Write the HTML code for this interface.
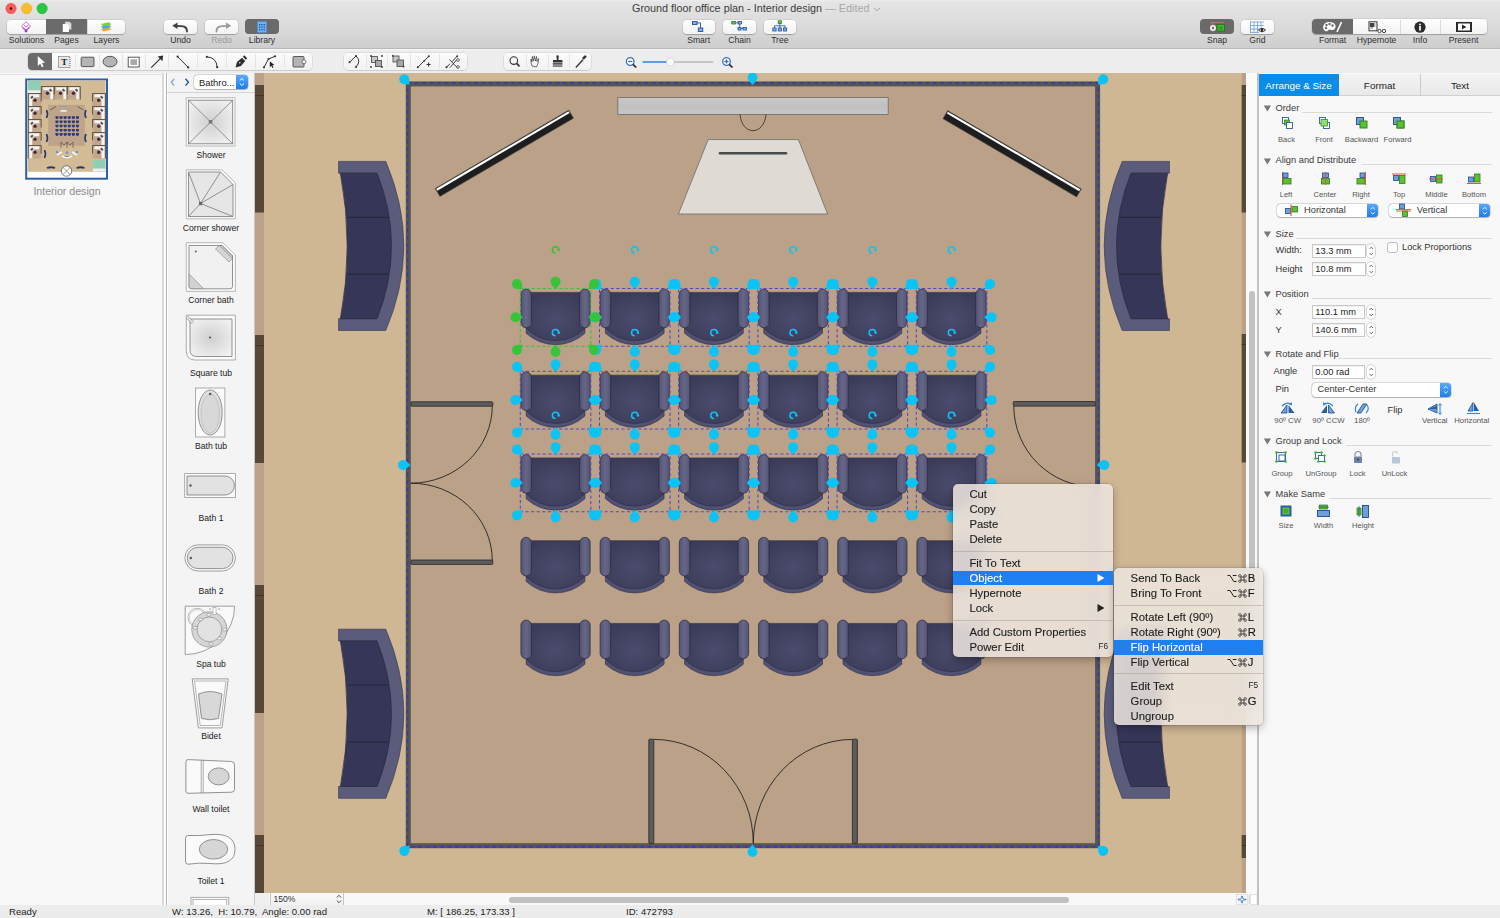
<!DOCTYPE html>
<html><head><meta charset="utf-8">
<style>
*{box-sizing:border-box;margin:0;padding:0}
html,body{width:1500px;height:918px;overflow:hidden;background:#ececec;font-family:"Liberation Sans",sans-serif;color:#222}
.abs{position:absolute}
svg{position:absolute;overflow:visible}
.lbl{position:absolute;font-size:9px;line-height:10px;color:#2e2e2e;white-space:nowrap}
.btn{position:absolute;height:15px;border-radius:4px;background:linear-gradient(#fefefe,#f3f3f3);box-shadow:0 0 0 0.5px rgba(0,0,0,.12),0 1px 1px rgba(0,0,0,.22)}
.dark{background:#6a6a6a}
.st{position:absolute;top:905px;font-size:9.6px;line-height:13px;color:#222;white-space:nowrap}
.mi{position:absolute;font-size:11.3px;line-height:15px;color:#141414;-webkit-text-stroke:0.12px currentColor;white-space:nowrap}
.sc{position:absolute;font-size:11.3px;line-height:15px;color:#1e1e1e;white-space:nowrap;text-align:right}
.libl{position:absolute;font-size:8.6px;line-height:10px;color:#1a1a1a;white-space:nowrap;text-align:center;width:88px;left:167px}
.rp{position:absolute;font-size:9px;line-height:11px;color:#333;white-space:nowrap}
.rps{position:absolute;font-size:7.6px;line-height:9px;color:#555;white-space:nowrap;text-align:center}
</style></head>
<body>

<div class="abs" style="left:0;top:0;width:1500px;height:49px;background:linear-gradient(#ececec 0px,#e5e5e5 2px,#d9d9d9 30px,#cecece 48px)"></div>
<div class="abs" style="left:0;top:48px;width:1500px;height:1px;background:#b8b8b8"></div><div class="abs" style="left:0;top:49px;width:1500px;height:1px;background:#f6f6f6"></div>
<div class="abs" style="left:0;top:50px;width:1500px;height:23px;background:#ededed"></div>

<div class="abs" style="left:0;top:73px;width:168px;height:832px;background:#f8f8f8"></div>
<div class="abs" style="left:162.4px;top:73px;width:1.4px;height:832px;background:#dadada"></div><div class="abs" style="left:163.8px;top:73px;width:2px;height:832px;background:#fdfdfd"></div><div class="abs" style="left:0;top:73.6px;width:162.4px;height:1px;background:#e4e4e4"></div>
<div class="abs" style="left:165.8px;top:73px;width:1.2px;height:832px;background:#b5b5b5"></div><div class="abs" style="left:167px;top:73px;width:1px;height:832px;background:#fdfdfd"></div>
<div class="abs" style="left:168px;top:73px;width:86px;height:832px;background:#f4f4f4"></div>
<div class="abs" style="left:253.8px;top:73px;width:1.2px;height:832px;background:#c9c9c9"></div><div class="abs" style="left:1246px;top:73px;width:11px;height:820px;background:#fafafa"></div>
<div class="abs" style="left:1257px;top:73px;width:1.8px;height:832px;background:#c2c2c2"></div>
<div class="abs" style="left:1258.8px;top:73px;width:241.2px;height:832px;background:#f8f8f8"></div>
<div class="abs" style="left:0;top:905px;width:1500px;height:13px;background:#ececec"></div>
<div class="st" style="left:9px">Ready</div>
<div class="st" style="left:172px">W: 13.26,&nbsp; H: 10.79,&nbsp; Angle: 0.00 rad</div>
<div class="st" style="left:427px">M: [ 186.25, 173.33 ]</div>
<div class="st" style="left:626px">ID: 472793</div>

<div class="abs" style="left:254.5px;top:893.3px;width:991.5px;height:11.7px;background:#f8f8f8"></div>
<div class="abs" style="left:254.5px;top:893.3px;width:0.8px;height:11.7px;background:#b8b8b8"></div>
<div class="abs" style="left:255.3px;top:893.3px;width:14px;height:11.7px;background:#efefef"></div>
<div class="abs" style="left:269.5px;top:893.3px;width:74px;height:11.7px;background:linear-gradient(#f9f9f9,#f1f1f1);border-left:0.8px solid #c4c4c4;border-right:0.8px solid #c4c4c4"></div>
<div class="abs" style="left:273.5px;top:893.5px;font-size:8.6px;line-height:11px;color:#333">150%</div>
<svg style="left:335px;top:893px" width="8" height="12" viewBox="0 0 8 12"><path d="M1.8,4.5 L4,2.3 L6.2,4.5 M1.8,7.5 L4,9.7 L6.2,7.5" fill="none" stroke="#333" stroke-width="0.9"/></svg>
<div class="abs" style="left:509px;top:896.5px;width:559.5px;height:6px;border-radius:3px;background:#c0c0c0"></div>
<div class="abs" style="left:1246px;top:893.3px;width:11px;height:11.7px;background:#f8f8f8"></div>
<svg style="left:1236px;top:894px" width="22" height="11" viewBox="0 0 22 11">
<rect x="0.5" y="0.5" width="11" height="10" fill="#f4f6fa" stroke="#c8ccd4" stroke-width="0.5"/>
<path d="M6,1.5 L4.5,3.5 H7.5 Z M6,9.5 L4.5,7.5 H7.5 Z M1.5,5.5 L3.5,4 V7 Z M10.5,5.5 L8.5,4 V7 Z" fill="#3a6fc0"/>
<circle cx="6" cy="5.5" r="1.6" fill="none" stroke="#3a6fc0" stroke-width="0.7"/>
<path d="M13.2,1 V10" stroke="#c0c8d8" stroke-width="0.8"/><rect x="14.5" y="0.5" width="6.5" height="10" fill="#fff" stroke="#c8c8c8" stroke-width="0.5"/>
</svg>
<div class="abs" style="left:1249px;top:290.8px;width:6.2px;height:414px;border-radius:3.1px;background:#c2c2c2"></div>
<svg style="left:255px;top:73px;overflow:hidden" width="991" height="820" viewBox="255 73 991 820"><defs>
<radialGradient id="seatg" cx="0.5" cy="0.55" r="0.6"><stop offset="0" stop-color="#4b4b6c"/><stop offset="1" stop-color="#3b3b59"/></radialGradient>
<linearGradient id="armg" x1="0" x2="1" y1="0" y2="0"><stop offset="0" stop-color="#545474"/><stop offset="0.5" stop-color="#666688"/><stop offset="1" stop-color="#545474"/></linearGradient>
<linearGradient id="scrg" x1="0" x2="0" y1="0" y2="1"><stop offset="0" stop-color="#c9c9c9"/><stop offset="0.5" stop-color="#c0c0c0"/><stop offset="1" stop-color="#c6c6c6"/></linearGradient>
</defs><rect x="255" y="73" width="991" height="820" fill="#cfb794"/><rect x="255" y="73" width="9" height="820" fill="#bba187"/><rect x="255" y="85" width="9" height="127.5" fill="#574838"/><line x1="255" x2="264" y1="95.5" y2="95.5" stroke="#3b3026" stroke-width="0.8"/><rect x="255" y="335" width="9" height="128" fill="#574838"/><line x1="255" x2="264" y1="345.5" y2="345.5" stroke="#3b3026" stroke-width="0.8"/><rect x="255" y="585" width="9" height="128" fill="#574838"/><line x1="255" x2="264" y1="595.5" y2="595.5" stroke="#3b3026" stroke-width="0.8"/><rect x="255" y="835" width="9" height="58" fill="#574838"/><line x1="255" x2="264" y1="845.5" y2="845.5" stroke="#3b3026" stroke-width="0.8"/><rect x="1241.7" y="73" width="4.3" height="820" fill="#bba187"/><rect x="1241.7" y="85" width="4.3" height="127.5" fill="#574838"/><line x1="1241.7" x2="1246" y1="95.5" y2="95.5" stroke="#3b3026" stroke-width="0.8"/><rect x="1241.7" y="334" width="4.3" height="128.5" fill="#574838"/><line x1="1241.7" x2="1246" y1="344.5" y2="344.5" stroke="#3b3026" stroke-width="0.8"/><rect x="1241.7" y="585" width="4.3" height="128" fill="#574838"/><line x1="1241.7" x2="1246" y1="595.5" y2="595.5" stroke="#3b3026" stroke-width="0.8"/><rect x="1241.7" y="835" width="4.3" height="23" fill="#574838"/><line x1="1241.7" x2="1246" y1="845.5" y2="845.5" stroke="#3b3026" stroke-width="0.8"/><rect x="408.3" y="83.9" width="689.3" height="761.8" fill="#bba187" stroke="#555555" stroke-width="5"/><rect x="407.5" y="83" width="691" height="763.7" fill="none" stroke="#3636b4" stroke-width="1.5" stroke-dasharray="3.8 3.6"/><rect x="617.8" y="97.6" width="270.4" height="16.9" fill="url(#scrg)" stroke="#6a6a6a" stroke-width="0.8"/><path d="M740,114.5 C742,136 764,136 766,114.5" fill="none" stroke="#2a2a2a" stroke-width="0.8"/><path d="M708.2,139.6 L798.4,139.6 L827.6,214 L678.4,214 Z" fill="#dfdbd4" stroke="#6a6a6a" stroke-width="0.8"/><line x1="720" y1="153.2" x2="786" y2="153.2" stroke="#4a4a4a" stroke-width="2.6" stroke-linecap="round"/><g transform="translate(504.35,153.30) rotate(-30.39)"><rect x="-77.50" y="-4.7" width="154.99" height="9.4" fill="#1e1e1e" stroke="#555" stroke-width="0.5"/><line x1="-76.70" x2="76.70" y1="-2.8000000000000003" y2="-2.8000000000000003" stroke="#ffffff" stroke-width="2.2"/></g><g transform="translate(1012.15,153.80) rotate(30.39)"><rect x="-77.50" y="-4.7" width="154.99" height="9.4" fill="#1e1e1e" stroke="#555" stroke-width="0.5"/><line x1="-76.70" x2="76.70" y1="-2.8000000000000003" y2="-2.8000000000000003" stroke="#ffffff" stroke-width="2.2"/></g><g transform="translate(0,0)"><path d="M338.6,161.4 L385.8,161.4 Q421.8,245.9 385.8,330.5 L338.6,330.5 L338.6,318.7 L377,318.7 Q405.8,245.9 377,173.2 L338.6,173.2 Z" fill="#5b5b7c" stroke="#3e3e56" stroke-width="0.7"/><path d="M340.4,173.2 L377,173.2 Q405.8,245.9 377,318.7 L340.4,318.7 Q354,245.9 340.4,173.2 Z" fill="#363659" stroke="#27273a" stroke-width="0.7"/><line x1="347.5" y1="217.3" x2="389" y2="217.3" stroke="#22222f" stroke-width="0.8"/><line x1="347.5" y1="274.2" x2="389" y2="274.2" stroke="#22222f" stroke-width="0.8"/></g><g transform="translate(0,467.8)"><path d="M338.6,161.4 L385.8,161.4 Q421.8,245.9 385.8,330.5 L338.6,330.5 L338.6,318.7 L377,318.7 Q405.8,245.9 377,173.2 L338.6,173.2 Z" fill="#5b5b7c" stroke="#3e3e56" stroke-width="0.7"/><path d="M340.4,173.2 L377,173.2 Q405.8,245.9 377,318.7 L340.4,318.7 Q354,245.9 340.4,173.2 Z" fill="#363659" stroke="#27273a" stroke-width="0.7"/><line x1="347.5" y1="217.3" x2="389" y2="217.3" stroke="#22222f" stroke-width="0.8"/><line x1="347.5" y1="274.2" x2="389" y2="274.2" stroke="#22222f" stroke-width="0.8"/></g><g transform="translate(1508,0) scale(-1,1)"><path d="M338.6,161.4 L385.8,161.4 Q421.8,245.9 385.8,330.5 L338.6,330.5 L338.6,318.7 L377,318.7 Q405.8,245.9 377,173.2 L338.6,173.2 Z" fill="#5b5b7c" stroke="#3e3e56" stroke-width="0.7"/><path d="M340.4,173.2 L377,173.2 Q405.8,245.9 377,318.7 L340.4,318.7 Q354,245.9 340.4,173.2 Z" fill="#363659" stroke="#27273a" stroke-width="0.7"/><line x1="347.5" y1="217.3" x2="389" y2="217.3" stroke="#22222f" stroke-width="0.8"/><line x1="347.5" y1="274.2" x2="389" y2="274.2" stroke="#22222f" stroke-width="0.8"/></g><g transform="translate(1508,467.8) scale(-1,1)"><path d="M338.6,161.4 L385.8,161.4 Q421.8,245.9 385.8,330.5 L338.6,330.5 L338.6,318.7 L377,318.7 Q405.8,245.9 377,173.2 L338.6,173.2 Z" fill="#5b5b7c" stroke="#3e3e56" stroke-width="0.7"/><path d="M340.4,173.2 L377,173.2 Q405.8,245.9 377,318.7 L340.4,318.7 Q354,245.9 340.4,173.2 Z" fill="#363659" stroke="#27273a" stroke-width="0.7"/><line x1="347.5" y1="217.3" x2="389" y2="217.3" stroke="#22222f" stroke-width="0.8"/><line x1="347.5" y1="274.2" x2="389" y2="274.2" stroke="#22222f" stroke-width="0.8"/></g><rect x="410.8" y="401.8" width="82.0" height="4.399999999999977" rx="1" fill="#5c5c5c" stroke="#262626" stroke-width="0.8"/><rect x="410.8" y="560" width="82.0" height="4.399999999999977" rx="1" fill="#5c5c5c" stroke="#262626" stroke-width="0.8"/><path d="M492.3,406 A81.5,77.5 0 0 1 410.8,483.2 A81.5,77.5 0 0 1 492.3,560.2" fill="none" stroke="#222" stroke-width="0.9"/><rect x="1013.3" y="401.5" width="82.0" height="4.600000000000023" rx="1" fill="#5c5c5c" stroke="#262626" stroke-width="0.8"/><path d="M1013.8,406 A81.5,81 0 0 0 1095.3,487" fill="none" stroke="#222" stroke-width="0.9"/><rect x="648.8" y="739.2" width="5.0" height="104.19999999999993" rx="1" fill="#5c5c5c" stroke="#262626" stroke-width="0.8"/><rect x="852.4" y="739.2" width="5.0" height="104.19999999999993" rx="1" fill="#5c5c5c" stroke="#262626" stroke-width="0.8"/><path d="M653.8,739.4 A99.5,104 0 0 1 753.3,843.4 A99.5,104 0 0 1 852.4,739.4" fill="none" stroke="#222" stroke-width="0.9"/><g transform="translate(520.30,288.50)"><path d="M5.9,39 L5.9,44.8 A43.5,43.5 0 0 0 64.6,44.8 L64.6,39 Z" fill="#515173" stroke="#2e2e44" stroke-width="0.6"/><path d="M10.8,3.9 L59.7,3.9 L59.7,37.5 L64.6,39.8 A41,41 0 0 1 5.9,39.8 L10.8,37.5 Z" fill="url(#seatg)" stroke="#2c2c44" stroke-width="0.6"/><rect x="0.6" y="0.6" width="10.5" height="38.6" rx="5.2" fill="url(#armg)" stroke="#2a2a3c" stroke-width="0.7"/><rect x="59.4" y="0.6" width="10.5" height="38.6" rx="5.2" fill="url(#armg)" stroke="#2a2a3c" stroke-width="0.7"/></g><g transform="translate(599.50,288.50)"><path d="M5.9,39 L5.9,44.8 A43.5,43.5 0 0 0 64.6,44.8 L64.6,39 Z" fill="#515173" stroke="#2e2e44" stroke-width="0.6"/><path d="M10.8,3.9 L59.7,3.9 L59.7,37.5 L64.6,39.8 A41,41 0 0 1 5.9,39.8 L10.8,37.5 Z" fill="url(#seatg)" stroke="#2c2c44" stroke-width="0.6"/><rect x="0.6" y="0.6" width="10.5" height="38.6" rx="5.2" fill="url(#armg)" stroke="#2a2a3c" stroke-width="0.7"/><rect x="59.4" y="0.6" width="10.5" height="38.6" rx="5.2" fill="url(#armg)" stroke="#2a2a3c" stroke-width="0.7"/></g><g transform="translate(678.70,288.50)"><path d="M5.9,39 L5.9,44.8 A43.5,43.5 0 0 0 64.6,44.8 L64.6,39 Z" fill="#515173" stroke="#2e2e44" stroke-width="0.6"/><path d="M10.8,3.9 L59.7,3.9 L59.7,37.5 L64.6,39.8 A41,41 0 0 1 5.9,39.8 L10.8,37.5 Z" fill="url(#seatg)" stroke="#2c2c44" stroke-width="0.6"/><rect x="0.6" y="0.6" width="10.5" height="38.6" rx="5.2" fill="url(#armg)" stroke="#2a2a3c" stroke-width="0.7"/><rect x="59.4" y="0.6" width="10.5" height="38.6" rx="5.2" fill="url(#armg)" stroke="#2a2a3c" stroke-width="0.7"/></g><g transform="translate(757.90,288.50)"><path d="M5.9,39 L5.9,44.8 A43.5,43.5 0 0 0 64.6,44.8 L64.6,39 Z" fill="#515173" stroke="#2e2e44" stroke-width="0.6"/><path d="M10.8,3.9 L59.7,3.9 L59.7,37.5 L64.6,39.8 A41,41 0 0 1 5.9,39.8 L10.8,37.5 Z" fill="url(#seatg)" stroke="#2c2c44" stroke-width="0.6"/><rect x="0.6" y="0.6" width="10.5" height="38.6" rx="5.2" fill="url(#armg)" stroke="#2a2a3c" stroke-width="0.7"/><rect x="59.4" y="0.6" width="10.5" height="38.6" rx="5.2" fill="url(#armg)" stroke="#2a2a3c" stroke-width="0.7"/></g><g transform="translate(837.10,288.50)"><path d="M5.9,39 L5.9,44.8 A43.5,43.5 0 0 0 64.6,44.8 L64.6,39 Z" fill="#515173" stroke="#2e2e44" stroke-width="0.6"/><path d="M10.8,3.9 L59.7,3.9 L59.7,37.5 L64.6,39.8 A41,41 0 0 1 5.9,39.8 L10.8,37.5 Z" fill="url(#seatg)" stroke="#2c2c44" stroke-width="0.6"/><rect x="0.6" y="0.6" width="10.5" height="38.6" rx="5.2" fill="url(#armg)" stroke="#2a2a3c" stroke-width="0.7"/><rect x="59.4" y="0.6" width="10.5" height="38.6" rx="5.2" fill="url(#armg)" stroke="#2a2a3c" stroke-width="0.7"/></g><g transform="translate(916.30,288.50)"><path d="M5.9,39 L5.9,44.8 A43.5,43.5 0 0 0 64.6,44.8 L64.6,39 Z" fill="#515173" stroke="#2e2e44" stroke-width="0.6"/><path d="M10.8,3.9 L59.7,3.9 L59.7,37.5 L64.6,39.8 A41,41 0 0 1 5.9,39.8 L10.8,37.5 Z" fill="url(#seatg)" stroke="#2c2c44" stroke-width="0.6"/><rect x="0.6" y="0.6" width="10.5" height="38.6" rx="5.2" fill="url(#armg)" stroke="#2a2a3c" stroke-width="0.7"/><rect x="59.4" y="0.6" width="10.5" height="38.6" rx="5.2" fill="url(#armg)" stroke="#2a2a3c" stroke-width="0.7"/></g><g transform="translate(520.30,371.25)"><path d="M5.9,39 L5.9,44.8 A43.5,43.5 0 0 0 64.6,44.8 L64.6,39 Z" fill="#515173" stroke="#2e2e44" stroke-width="0.6"/><path d="M10.8,3.9 L59.7,3.9 L59.7,37.5 L64.6,39.8 A41,41 0 0 1 5.9,39.8 L10.8,37.5 Z" fill="url(#seatg)" stroke="#2c2c44" stroke-width="0.6"/><rect x="0.6" y="0.6" width="10.5" height="38.6" rx="5.2" fill="url(#armg)" stroke="#2a2a3c" stroke-width="0.7"/><rect x="59.4" y="0.6" width="10.5" height="38.6" rx="5.2" fill="url(#armg)" stroke="#2a2a3c" stroke-width="0.7"/></g><g transform="translate(599.50,371.25)"><path d="M5.9,39 L5.9,44.8 A43.5,43.5 0 0 0 64.6,44.8 L64.6,39 Z" fill="#515173" stroke="#2e2e44" stroke-width="0.6"/><path d="M10.8,3.9 L59.7,3.9 L59.7,37.5 L64.6,39.8 A41,41 0 0 1 5.9,39.8 L10.8,37.5 Z" fill="url(#seatg)" stroke="#2c2c44" stroke-width="0.6"/><rect x="0.6" y="0.6" width="10.5" height="38.6" rx="5.2" fill="url(#armg)" stroke="#2a2a3c" stroke-width="0.7"/><rect x="59.4" y="0.6" width="10.5" height="38.6" rx="5.2" fill="url(#armg)" stroke="#2a2a3c" stroke-width="0.7"/></g><g transform="translate(678.70,371.25)"><path d="M5.9,39 L5.9,44.8 A43.5,43.5 0 0 0 64.6,44.8 L64.6,39 Z" fill="#515173" stroke="#2e2e44" stroke-width="0.6"/><path d="M10.8,3.9 L59.7,3.9 L59.7,37.5 L64.6,39.8 A41,41 0 0 1 5.9,39.8 L10.8,37.5 Z" fill="url(#seatg)" stroke="#2c2c44" stroke-width="0.6"/><rect x="0.6" y="0.6" width="10.5" height="38.6" rx="5.2" fill="url(#armg)" stroke="#2a2a3c" stroke-width="0.7"/><rect x="59.4" y="0.6" width="10.5" height="38.6" rx="5.2" fill="url(#armg)" stroke="#2a2a3c" stroke-width="0.7"/></g><g transform="translate(757.90,371.25)"><path d="M5.9,39 L5.9,44.8 A43.5,43.5 0 0 0 64.6,44.8 L64.6,39 Z" fill="#515173" stroke="#2e2e44" stroke-width="0.6"/><path d="M10.8,3.9 L59.7,3.9 L59.7,37.5 L64.6,39.8 A41,41 0 0 1 5.9,39.8 L10.8,37.5 Z" fill="url(#seatg)" stroke="#2c2c44" stroke-width="0.6"/><rect x="0.6" y="0.6" width="10.5" height="38.6" rx="5.2" fill="url(#armg)" stroke="#2a2a3c" stroke-width="0.7"/><rect x="59.4" y="0.6" width="10.5" height="38.6" rx="5.2" fill="url(#armg)" stroke="#2a2a3c" stroke-width="0.7"/></g><g transform="translate(837.10,371.25)"><path d="M5.9,39 L5.9,44.8 A43.5,43.5 0 0 0 64.6,44.8 L64.6,39 Z" fill="#515173" stroke="#2e2e44" stroke-width="0.6"/><path d="M10.8,3.9 L59.7,3.9 L59.7,37.5 L64.6,39.8 A41,41 0 0 1 5.9,39.8 L10.8,37.5 Z" fill="url(#seatg)" stroke="#2c2c44" stroke-width="0.6"/><rect x="0.6" y="0.6" width="10.5" height="38.6" rx="5.2" fill="url(#armg)" stroke="#2a2a3c" stroke-width="0.7"/><rect x="59.4" y="0.6" width="10.5" height="38.6" rx="5.2" fill="url(#armg)" stroke="#2a2a3c" stroke-width="0.7"/></g><g transform="translate(916.30,371.25)"><path d="M5.9,39 L5.9,44.8 A43.5,43.5 0 0 0 64.6,44.8 L64.6,39 Z" fill="#515173" stroke="#2e2e44" stroke-width="0.6"/><path d="M10.8,3.9 L59.7,3.9 L59.7,37.5 L64.6,39.8 A41,41 0 0 1 5.9,39.8 L10.8,37.5 Z" fill="url(#seatg)" stroke="#2c2c44" stroke-width="0.6"/><rect x="0.6" y="0.6" width="10.5" height="38.6" rx="5.2" fill="url(#armg)" stroke="#2a2a3c" stroke-width="0.7"/><rect x="59.4" y="0.6" width="10.5" height="38.6" rx="5.2" fill="url(#armg)" stroke="#2a2a3c" stroke-width="0.7"/></g><g transform="translate(520.30,454.00)"><path d="M5.9,39 L5.9,44.8 A43.5,43.5 0 0 0 64.6,44.8 L64.6,39 Z" fill="#515173" stroke="#2e2e44" stroke-width="0.6"/><path d="M10.8,3.9 L59.7,3.9 L59.7,37.5 L64.6,39.8 A41,41 0 0 1 5.9,39.8 L10.8,37.5 Z" fill="url(#seatg)" stroke="#2c2c44" stroke-width="0.6"/><rect x="0.6" y="0.6" width="10.5" height="38.6" rx="5.2" fill="url(#armg)" stroke="#2a2a3c" stroke-width="0.7"/><rect x="59.4" y="0.6" width="10.5" height="38.6" rx="5.2" fill="url(#armg)" stroke="#2a2a3c" stroke-width="0.7"/></g><g transform="translate(599.50,454.00)"><path d="M5.9,39 L5.9,44.8 A43.5,43.5 0 0 0 64.6,44.8 L64.6,39 Z" fill="#515173" stroke="#2e2e44" stroke-width="0.6"/><path d="M10.8,3.9 L59.7,3.9 L59.7,37.5 L64.6,39.8 A41,41 0 0 1 5.9,39.8 L10.8,37.5 Z" fill="url(#seatg)" stroke="#2c2c44" stroke-width="0.6"/><rect x="0.6" y="0.6" width="10.5" height="38.6" rx="5.2" fill="url(#armg)" stroke="#2a2a3c" stroke-width="0.7"/><rect x="59.4" y="0.6" width="10.5" height="38.6" rx="5.2" fill="url(#armg)" stroke="#2a2a3c" stroke-width="0.7"/></g><g transform="translate(678.70,454.00)"><path d="M5.9,39 L5.9,44.8 A43.5,43.5 0 0 0 64.6,44.8 L64.6,39 Z" fill="#515173" stroke="#2e2e44" stroke-width="0.6"/><path d="M10.8,3.9 L59.7,3.9 L59.7,37.5 L64.6,39.8 A41,41 0 0 1 5.9,39.8 L10.8,37.5 Z" fill="url(#seatg)" stroke="#2c2c44" stroke-width="0.6"/><rect x="0.6" y="0.6" width="10.5" height="38.6" rx="5.2" fill="url(#armg)" stroke="#2a2a3c" stroke-width="0.7"/><rect x="59.4" y="0.6" width="10.5" height="38.6" rx="5.2" fill="url(#armg)" stroke="#2a2a3c" stroke-width="0.7"/></g><g transform="translate(757.90,454.00)"><path d="M5.9,39 L5.9,44.8 A43.5,43.5 0 0 0 64.6,44.8 L64.6,39 Z" fill="#515173" stroke="#2e2e44" stroke-width="0.6"/><path d="M10.8,3.9 L59.7,3.9 L59.7,37.5 L64.6,39.8 A41,41 0 0 1 5.9,39.8 L10.8,37.5 Z" fill="url(#seatg)" stroke="#2c2c44" stroke-width="0.6"/><rect x="0.6" y="0.6" width="10.5" height="38.6" rx="5.2" fill="url(#armg)" stroke="#2a2a3c" stroke-width="0.7"/><rect x="59.4" y="0.6" width="10.5" height="38.6" rx="5.2" fill="url(#armg)" stroke="#2a2a3c" stroke-width="0.7"/></g><g transform="translate(837.10,454.00)"><path d="M5.9,39 L5.9,44.8 A43.5,43.5 0 0 0 64.6,44.8 L64.6,39 Z" fill="#515173" stroke="#2e2e44" stroke-width="0.6"/><path d="M10.8,3.9 L59.7,3.9 L59.7,37.5 L64.6,39.8 A41,41 0 0 1 5.9,39.8 L10.8,37.5 Z" fill="url(#seatg)" stroke="#2c2c44" stroke-width="0.6"/><rect x="0.6" y="0.6" width="10.5" height="38.6" rx="5.2" fill="url(#armg)" stroke="#2a2a3c" stroke-width="0.7"/><rect x="59.4" y="0.6" width="10.5" height="38.6" rx="5.2" fill="url(#armg)" stroke="#2a2a3c" stroke-width="0.7"/></g><g transform="translate(916.30,454.00)"><path d="M5.9,39 L5.9,44.8 A43.5,43.5 0 0 0 64.6,44.8 L64.6,39 Z" fill="#515173" stroke="#2e2e44" stroke-width="0.6"/><path d="M10.8,3.9 L59.7,3.9 L59.7,37.5 L64.6,39.8 A41,41 0 0 1 5.9,39.8 L10.8,37.5 Z" fill="url(#seatg)" stroke="#2c2c44" stroke-width="0.6"/><rect x="0.6" y="0.6" width="10.5" height="38.6" rx="5.2" fill="url(#armg)" stroke="#2a2a3c" stroke-width="0.7"/><rect x="59.4" y="0.6" width="10.5" height="38.6" rx="5.2" fill="url(#armg)" stroke="#2a2a3c" stroke-width="0.7"/></g><g transform="translate(520.30,536.75)"><path d="M5.9,39 L5.9,44.8 A43.5,43.5 0 0 0 64.6,44.8 L64.6,39 Z" fill="#515173" stroke="#2e2e44" stroke-width="0.6"/><path d="M10.8,3.9 L59.7,3.9 L59.7,37.5 L64.6,39.8 A41,41 0 0 1 5.9,39.8 L10.8,37.5 Z" fill="url(#seatg)" stroke="#2c2c44" stroke-width="0.6"/><rect x="0.6" y="0.6" width="10.5" height="38.6" rx="5.2" fill="url(#armg)" stroke="#2a2a3c" stroke-width="0.7"/><rect x="59.4" y="0.6" width="10.5" height="38.6" rx="5.2" fill="url(#armg)" stroke="#2a2a3c" stroke-width="0.7"/></g><g transform="translate(599.50,536.75)"><path d="M5.9,39 L5.9,44.8 A43.5,43.5 0 0 0 64.6,44.8 L64.6,39 Z" fill="#515173" stroke="#2e2e44" stroke-width="0.6"/><path d="M10.8,3.9 L59.7,3.9 L59.7,37.5 L64.6,39.8 A41,41 0 0 1 5.9,39.8 L10.8,37.5 Z" fill="url(#seatg)" stroke="#2c2c44" stroke-width="0.6"/><rect x="0.6" y="0.6" width="10.5" height="38.6" rx="5.2" fill="url(#armg)" stroke="#2a2a3c" stroke-width="0.7"/><rect x="59.4" y="0.6" width="10.5" height="38.6" rx="5.2" fill="url(#armg)" stroke="#2a2a3c" stroke-width="0.7"/></g><g transform="translate(678.70,536.75)"><path d="M5.9,39 L5.9,44.8 A43.5,43.5 0 0 0 64.6,44.8 L64.6,39 Z" fill="#515173" stroke="#2e2e44" stroke-width="0.6"/><path d="M10.8,3.9 L59.7,3.9 L59.7,37.5 L64.6,39.8 A41,41 0 0 1 5.9,39.8 L10.8,37.5 Z" fill="url(#seatg)" stroke="#2c2c44" stroke-width="0.6"/><rect x="0.6" y="0.6" width="10.5" height="38.6" rx="5.2" fill="url(#armg)" stroke="#2a2a3c" stroke-width="0.7"/><rect x="59.4" y="0.6" width="10.5" height="38.6" rx="5.2" fill="url(#armg)" stroke="#2a2a3c" stroke-width="0.7"/></g><g transform="translate(757.90,536.75)"><path d="M5.9,39 L5.9,44.8 A43.5,43.5 0 0 0 64.6,44.8 L64.6,39 Z" fill="#515173" stroke="#2e2e44" stroke-width="0.6"/><path d="M10.8,3.9 L59.7,3.9 L59.7,37.5 L64.6,39.8 A41,41 0 0 1 5.9,39.8 L10.8,37.5 Z" fill="url(#seatg)" stroke="#2c2c44" stroke-width="0.6"/><rect x="0.6" y="0.6" width="10.5" height="38.6" rx="5.2" fill="url(#armg)" stroke="#2a2a3c" stroke-width="0.7"/><rect x="59.4" y="0.6" width="10.5" height="38.6" rx="5.2" fill="url(#armg)" stroke="#2a2a3c" stroke-width="0.7"/></g><g transform="translate(837.10,536.75)"><path d="M5.9,39 L5.9,44.8 A43.5,43.5 0 0 0 64.6,44.8 L64.6,39 Z" fill="#515173" stroke="#2e2e44" stroke-width="0.6"/><path d="M10.8,3.9 L59.7,3.9 L59.7,37.5 L64.6,39.8 A41,41 0 0 1 5.9,39.8 L10.8,37.5 Z" fill="url(#seatg)" stroke="#2c2c44" stroke-width="0.6"/><rect x="0.6" y="0.6" width="10.5" height="38.6" rx="5.2" fill="url(#armg)" stroke="#2a2a3c" stroke-width="0.7"/><rect x="59.4" y="0.6" width="10.5" height="38.6" rx="5.2" fill="url(#armg)" stroke="#2a2a3c" stroke-width="0.7"/></g><g transform="translate(916.30,536.75)"><path d="M5.9,39 L5.9,44.8 A43.5,43.5 0 0 0 64.6,44.8 L64.6,39 Z" fill="#515173" stroke="#2e2e44" stroke-width="0.6"/><path d="M10.8,3.9 L59.7,3.9 L59.7,37.5 L64.6,39.8 A41,41 0 0 1 5.9,39.8 L10.8,37.5 Z" fill="url(#seatg)" stroke="#2c2c44" stroke-width="0.6"/><rect x="0.6" y="0.6" width="10.5" height="38.6" rx="5.2" fill="url(#armg)" stroke="#2a2a3c" stroke-width="0.7"/><rect x="59.4" y="0.6" width="10.5" height="38.6" rx="5.2" fill="url(#armg)" stroke="#2a2a3c" stroke-width="0.7"/></g><g transform="translate(520.30,619.50)"><path d="M5.9,39 L5.9,44.8 A43.5,43.5 0 0 0 64.6,44.8 L64.6,39 Z" fill="#515173" stroke="#2e2e44" stroke-width="0.6"/><path d="M10.8,3.9 L59.7,3.9 L59.7,37.5 L64.6,39.8 A41,41 0 0 1 5.9,39.8 L10.8,37.5 Z" fill="url(#seatg)" stroke="#2c2c44" stroke-width="0.6"/><rect x="0.6" y="0.6" width="10.5" height="38.6" rx="5.2" fill="url(#armg)" stroke="#2a2a3c" stroke-width="0.7"/><rect x="59.4" y="0.6" width="10.5" height="38.6" rx="5.2" fill="url(#armg)" stroke="#2a2a3c" stroke-width="0.7"/></g><g transform="translate(599.50,619.50)"><path d="M5.9,39 L5.9,44.8 A43.5,43.5 0 0 0 64.6,44.8 L64.6,39 Z" fill="#515173" stroke="#2e2e44" stroke-width="0.6"/><path d="M10.8,3.9 L59.7,3.9 L59.7,37.5 L64.6,39.8 A41,41 0 0 1 5.9,39.8 L10.8,37.5 Z" fill="url(#seatg)" stroke="#2c2c44" stroke-width="0.6"/><rect x="0.6" y="0.6" width="10.5" height="38.6" rx="5.2" fill="url(#armg)" stroke="#2a2a3c" stroke-width="0.7"/><rect x="59.4" y="0.6" width="10.5" height="38.6" rx="5.2" fill="url(#armg)" stroke="#2a2a3c" stroke-width="0.7"/></g><g transform="translate(678.70,619.50)"><path d="M5.9,39 L5.9,44.8 A43.5,43.5 0 0 0 64.6,44.8 L64.6,39 Z" fill="#515173" stroke="#2e2e44" stroke-width="0.6"/><path d="M10.8,3.9 L59.7,3.9 L59.7,37.5 L64.6,39.8 A41,41 0 0 1 5.9,39.8 L10.8,37.5 Z" fill="url(#seatg)" stroke="#2c2c44" stroke-width="0.6"/><rect x="0.6" y="0.6" width="10.5" height="38.6" rx="5.2" fill="url(#armg)" stroke="#2a2a3c" stroke-width="0.7"/><rect x="59.4" y="0.6" width="10.5" height="38.6" rx="5.2" fill="url(#armg)" stroke="#2a2a3c" stroke-width="0.7"/></g><g transform="translate(757.90,619.50)"><path d="M5.9,39 L5.9,44.8 A43.5,43.5 0 0 0 64.6,44.8 L64.6,39 Z" fill="#515173" stroke="#2e2e44" stroke-width="0.6"/><path d="M10.8,3.9 L59.7,3.9 L59.7,37.5 L64.6,39.8 A41,41 0 0 1 5.9,39.8 L10.8,37.5 Z" fill="url(#seatg)" stroke="#2c2c44" stroke-width="0.6"/><rect x="0.6" y="0.6" width="10.5" height="38.6" rx="5.2" fill="url(#armg)" stroke="#2a2a3c" stroke-width="0.7"/><rect x="59.4" y="0.6" width="10.5" height="38.6" rx="5.2" fill="url(#armg)" stroke="#2a2a3c" stroke-width="0.7"/></g><g transform="translate(837.10,619.50)"><path d="M5.9,39 L5.9,44.8 A43.5,43.5 0 0 0 64.6,44.8 L64.6,39 Z" fill="#515173" stroke="#2e2e44" stroke-width="0.6"/><path d="M10.8,3.9 L59.7,3.9 L59.7,37.5 L64.6,39.8 A41,41 0 0 1 5.9,39.8 L10.8,37.5 Z" fill="url(#seatg)" stroke="#2c2c44" stroke-width="0.6"/><rect x="0.6" y="0.6" width="10.5" height="38.6" rx="5.2" fill="url(#armg)" stroke="#2a2a3c" stroke-width="0.7"/><rect x="59.4" y="0.6" width="10.5" height="38.6" rx="5.2" fill="url(#armg)" stroke="#2a2a3c" stroke-width="0.7"/></g><g transform="translate(916.30,619.50)"><path d="M5.9,39 L5.9,44.8 A43.5,43.5 0 0 0 64.6,44.8 L64.6,39 Z" fill="#515173" stroke="#2e2e44" stroke-width="0.6"/><path d="M10.8,3.9 L59.7,3.9 L59.7,37.5 L64.6,39.8 A41,41 0 0 1 5.9,39.8 L10.8,37.5 Z" fill="url(#seatg)" stroke="#2c2c44" stroke-width="0.6"/><rect x="0.6" y="0.6" width="10.5" height="38.6" rx="5.2" fill="url(#armg)" stroke="#2a2a3c" stroke-width="0.7"/><rect x="59.4" y="0.6" width="10.5" height="38.6" rx="5.2" fill="url(#armg)" stroke="#2a2a3c" stroke-width="0.7"/></g></svg><svg style="left:255px;top:73px;overflow:hidden" width="991" height="820" viewBox="255 73 991 820"><path d="M409.60,84.60 L404.02,84.29 A5.0,5.0 0 1 1 409.29,79.02 Z" fill="#0bc3f5"/><path d="M752.50,85.00 L748.77,80.83 A5.0,5.0 0 1 1 756.23,80.83 Z" fill="#0bc3f5"/><path d="M1097.90,84.60 L1098.21,79.02 A5.0,5.0 0 1 1 1103.48,84.29 Z" fill="#0bc3f5"/><path d="M410.50,465.00 L406.33,468.73 A5.0,5.0 0 1 1 406.33,461.27 Z" fill="#0bc3f5"/><path d="M1096.80,465.00 L1100.97,461.27 A5.0,5.0 0 1 1 1100.97,468.73 Z" fill="#0bc3f5"/><path d="M409.60,845.70 L409.29,851.28 A5.0,5.0 0 1 1 404.02,846.01 Z" fill="#0bc3f5"/><path d="M752.50,844.50 L756.23,848.67 A5.0,5.0 0 1 1 748.77,848.67 Z" fill="#0bc3f5"/><path d="M1097.90,845.70 L1103.48,846.01 A5.0,5.0 0 1 1 1098.21,851.28 Z" fill="#0bc3f5"/><rect x="599.50" y="288.50" width="70.5" height="57.7" fill="none" stroke="#5446c6" stroke-width="1.05" stroke-dasharray="3.2 2.4"/><rect x="678.70" y="288.50" width="70.5" height="57.7" fill="none" stroke="#5446c6" stroke-width="1.05" stroke-dasharray="3.2 2.4"/><rect x="757.90" y="288.50" width="70.5" height="57.7" fill="none" stroke="#5446c6" stroke-width="1.05" stroke-dasharray="3.2 2.4"/><rect x="837.10" y="288.50" width="70.5" height="57.7" fill="none" stroke="#5446c6" stroke-width="1.05" stroke-dasharray="3.2 2.4"/><rect x="916.30" y="288.50" width="70.5" height="57.7" fill="none" stroke="#5446c6" stroke-width="1.05" stroke-dasharray="3.2 2.4"/><rect x="520.30" y="371.25" width="70.5" height="57.7" fill="none" stroke="#5446c6" stroke-width="1.05" stroke-dasharray="3.2 2.4"/><rect x="599.50" y="371.25" width="70.5" height="57.7" fill="none" stroke="#5446c6" stroke-width="1.05" stroke-dasharray="3.2 2.4"/><rect x="678.70" y="371.25" width="70.5" height="57.7" fill="none" stroke="#5446c6" stroke-width="1.05" stroke-dasharray="3.2 2.4"/><rect x="757.90" y="371.25" width="70.5" height="57.7" fill="none" stroke="#5446c6" stroke-width="1.05" stroke-dasharray="3.2 2.4"/><rect x="837.10" y="371.25" width="70.5" height="57.7" fill="none" stroke="#5446c6" stroke-width="1.05" stroke-dasharray="3.2 2.4"/><rect x="916.30" y="371.25" width="70.5" height="57.7" fill="none" stroke="#5446c6" stroke-width="1.05" stroke-dasharray="3.2 2.4"/><rect x="520.30" y="454.00" width="70.5" height="57.7" fill="none" stroke="#5446c6" stroke-width="1.05" stroke-dasharray="3.2 2.4"/><rect x="599.50" y="454.00" width="70.5" height="57.7" fill="none" stroke="#5446c6" stroke-width="1.05" stroke-dasharray="3.2 2.4"/><rect x="678.70" y="454.00" width="70.5" height="57.7" fill="none" stroke="#5446c6" stroke-width="1.05" stroke-dasharray="3.2 2.4"/><rect x="757.90" y="454.00" width="70.5" height="57.7" fill="none" stroke="#5446c6" stroke-width="1.05" stroke-dasharray="3.2 2.4"/><rect x="837.10" y="454.00" width="70.5" height="57.7" fill="none" stroke="#5446c6" stroke-width="1.05" stroke-dasharray="3.2 2.4"/><rect x="916.30" y="454.00" width="70.5" height="57.7" fill="none" stroke="#5446c6" stroke-width="1.05" stroke-dasharray="3.2 2.4"/><path d="M601.50,289.20 L595.92,288.89 A5.0,5.0 0 1 1 601.19,283.62 Z" fill="#0bc3f5"/><path d="M634.75,289.20 L631.02,285.03 A5.0,5.0 0 1 1 638.48,285.03 Z" fill="#0bc3f5"/><path d="M668.00,289.20 L668.31,283.62 A5.0,5.0 0 1 1 673.58,288.89 Z" fill="#0bc3f5"/><path d="M602.10,317.35 L597.93,321.08 A5.0,5.0 0 1 1 597.93,313.62 Z" fill="#0bc3f5"/><path d="M667.40,317.35 L671.57,313.62 A5.0,5.0 0 1 1 671.57,321.08 Z" fill="#0bc3f5"/><path d="M601.50,344.60 L601.19,350.18 A5.0,5.0 0 1 1 595.92,344.91 Z" fill="#0bc3f5"/><path d="M634.75,344.40 L638.48,348.57 A5.0,5.0 0 1 1 631.02,348.57 Z" fill="#0bc3f5"/><path d="M668.00,344.60 L673.58,344.91 A5.0,5.0 0 1 1 668.31,350.18 Z" fill="#0bc3f5"/><path d="M634.19,253.05 A3.2,3.2 0 1 1 637.95,249.90" fill="none" stroke="#0bc3f5" stroke-width="1.5" stroke-linecap="round"/><circle cx="637.95" cy="250.10" r="1.25" fill="#0bc3f5"/><path d="M680.70,289.20 L675.12,288.89 A5.0,5.0 0 1 1 680.39,283.62 Z" fill="#0bc3f5"/><path d="M713.95,289.20 L710.22,285.03 A5.0,5.0 0 1 1 717.68,285.03 Z" fill="#0bc3f5"/><path d="M747.20,289.20 L747.51,283.62 A5.0,5.0 0 1 1 752.78,288.89 Z" fill="#0bc3f5"/><path d="M681.30,317.35 L677.13,321.08 A5.0,5.0 0 1 1 677.13,313.62 Z" fill="#0bc3f5"/><path d="M746.60,317.35 L750.77,313.62 A5.0,5.0 0 1 1 750.77,321.08 Z" fill="#0bc3f5"/><path d="M680.70,344.60 L680.39,350.18 A5.0,5.0 0 1 1 675.12,344.91 Z" fill="#0bc3f5"/><path d="M713.95,344.40 L717.68,348.57 A5.0,5.0 0 1 1 710.22,348.57 Z" fill="#0bc3f5"/><path d="M747.20,344.60 L752.78,344.91 A5.0,5.0 0 1 1 747.51,350.18 Z" fill="#0bc3f5"/><path d="M713.39,253.05 A3.2,3.2 0 1 1 717.15,249.90" fill="none" stroke="#0bc3f5" stroke-width="1.5" stroke-linecap="round"/><circle cx="717.15" cy="250.10" r="1.25" fill="#0bc3f5"/><path d="M759.90,289.20 L754.32,288.89 A5.0,5.0 0 1 1 759.59,283.62 Z" fill="#0bc3f5"/><path d="M793.15,289.20 L789.42,285.03 A5.0,5.0 0 1 1 796.88,285.03 Z" fill="#0bc3f5"/><path d="M826.40,289.20 L826.71,283.62 A5.0,5.0 0 1 1 831.98,288.89 Z" fill="#0bc3f5"/><path d="M760.50,317.35 L756.33,321.08 A5.0,5.0 0 1 1 756.33,313.62 Z" fill="#0bc3f5"/><path d="M825.80,317.35 L829.97,313.62 A5.0,5.0 0 1 1 829.97,321.08 Z" fill="#0bc3f5"/><path d="M759.90,344.60 L759.59,350.18 A5.0,5.0 0 1 1 754.32,344.91 Z" fill="#0bc3f5"/><path d="M793.15,344.40 L796.88,348.57 A5.0,5.0 0 1 1 789.42,348.57 Z" fill="#0bc3f5"/><path d="M826.40,344.60 L831.98,344.91 A5.0,5.0 0 1 1 826.71,350.18 Z" fill="#0bc3f5"/><path d="M792.59,253.05 A3.2,3.2 0 1 1 796.35,249.90" fill="none" stroke="#0bc3f5" stroke-width="1.5" stroke-linecap="round"/><circle cx="796.35" cy="250.10" r="1.25" fill="#0bc3f5"/><path d="M839.10,289.20 L833.52,288.89 A5.0,5.0 0 1 1 838.79,283.62 Z" fill="#0bc3f5"/><path d="M872.35,289.20 L868.62,285.03 A5.0,5.0 0 1 1 876.08,285.03 Z" fill="#0bc3f5"/><path d="M905.60,289.20 L905.91,283.62 A5.0,5.0 0 1 1 911.18,288.89 Z" fill="#0bc3f5"/><path d="M839.70,317.35 L835.53,321.08 A5.0,5.0 0 1 1 835.53,313.62 Z" fill="#0bc3f5"/><path d="M905.00,317.35 L909.17,313.62 A5.0,5.0 0 1 1 909.17,321.08 Z" fill="#0bc3f5"/><path d="M839.10,344.60 L838.79,350.18 A5.0,5.0 0 1 1 833.52,344.91 Z" fill="#0bc3f5"/><path d="M872.35,344.40 L876.08,348.57 A5.0,5.0 0 1 1 868.62,348.57 Z" fill="#0bc3f5"/><path d="M905.60,344.60 L911.18,344.91 A5.0,5.0 0 1 1 905.91,350.18 Z" fill="#0bc3f5"/><path d="M871.79,253.05 A3.2,3.2 0 1 1 875.55,249.90" fill="none" stroke="#0bc3f5" stroke-width="1.5" stroke-linecap="round"/><circle cx="875.55" cy="250.10" r="1.25" fill="#0bc3f5"/><path d="M918.30,289.20 L912.72,288.89 A5.0,5.0 0 1 1 917.99,283.62 Z" fill="#0bc3f5"/><path d="M951.55,289.20 L947.82,285.03 A5.0,5.0 0 1 1 955.28,285.03 Z" fill="#0bc3f5"/><path d="M984.80,289.20 L985.11,283.62 A5.0,5.0 0 1 1 990.38,288.89 Z" fill="#0bc3f5"/><path d="M918.90,317.35 L914.73,321.08 A5.0,5.0 0 1 1 914.73,313.62 Z" fill="#0bc3f5"/><path d="M984.20,317.35 L988.37,313.62 A5.0,5.0 0 1 1 988.37,321.08 Z" fill="#0bc3f5"/><path d="M918.30,344.60 L917.99,350.18 A5.0,5.0 0 1 1 912.72,344.91 Z" fill="#0bc3f5"/><path d="M951.55,344.40 L955.28,348.57 A5.0,5.0 0 1 1 947.82,348.57 Z" fill="#0bc3f5"/><path d="M984.80,344.60 L990.38,344.91 A5.0,5.0 0 1 1 985.11,350.18 Z" fill="#0bc3f5"/><path d="M950.99,253.05 A3.2,3.2 0 1 1 954.75,249.90" fill="none" stroke="#0bc3f5" stroke-width="1.5" stroke-linecap="round"/><circle cx="954.75" cy="250.10" r="1.25" fill="#0bc3f5"/><path d="M522.30,371.95 L516.72,371.64 A5.0,5.0 0 1 1 521.99,366.37 Z" fill="#0bc3f5"/><path d="M555.55,371.95 L551.82,367.78 A5.0,5.0 0 1 1 559.28,367.78 Z" fill="#0bc3f5"/><path d="M588.80,371.95 L589.11,366.37 A5.0,5.0 0 1 1 594.38,371.64 Z" fill="#0bc3f5"/><path d="M522.90,400.10 L518.73,403.83 A5.0,5.0 0 1 1 518.73,396.37 Z" fill="#0bc3f5"/><path d="M588.20,400.10 L592.37,396.37 A5.0,5.0 0 1 1 592.37,403.83 Z" fill="#0bc3f5"/><path d="M522.30,427.35 L521.99,432.93 A5.0,5.0 0 1 1 516.72,427.66 Z" fill="#0bc3f5"/><path d="M555.55,427.15 L559.28,431.32 A5.0,5.0 0 1 1 551.82,431.32 Z" fill="#0bc3f5"/><path d="M588.80,427.35 L594.38,427.66 A5.0,5.0 0 1 1 589.11,432.93 Z" fill="#0bc3f5"/><path d="M554.99,335.80 A3.2,3.2 0 1 1 558.75,332.65" fill="none" stroke="#0bc3f5" stroke-width="1.5" stroke-linecap="round"/><circle cx="558.75" cy="332.85" r="1.25" fill="#0bc3f5"/><path d="M601.50,371.95 L595.92,371.64 A5.0,5.0 0 1 1 601.19,366.37 Z" fill="#0bc3f5"/><path d="M634.75,371.95 L631.02,367.78 A5.0,5.0 0 1 1 638.48,367.78 Z" fill="#0bc3f5"/><path d="M668.00,371.95 L668.31,366.37 A5.0,5.0 0 1 1 673.58,371.64 Z" fill="#0bc3f5"/><path d="M602.10,400.10 L597.93,403.83 A5.0,5.0 0 1 1 597.93,396.37 Z" fill="#0bc3f5"/><path d="M667.40,400.10 L671.57,396.37 A5.0,5.0 0 1 1 671.57,403.83 Z" fill="#0bc3f5"/><path d="M601.50,427.35 L601.19,432.93 A5.0,5.0 0 1 1 595.92,427.66 Z" fill="#0bc3f5"/><path d="M634.75,427.15 L638.48,431.32 A5.0,5.0 0 1 1 631.02,431.32 Z" fill="#0bc3f5"/><path d="M668.00,427.35 L673.58,427.66 A5.0,5.0 0 1 1 668.31,432.93 Z" fill="#0bc3f5"/><path d="M634.19,335.80 A3.2,3.2 0 1 1 637.95,332.65" fill="none" stroke="#0bc3f5" stroke-width="1.5" stroke-linecap="round"/><circle cx="637.95" cy="332.85" r="1.25" fill="#0bc3f5"/><path d="M680.70,371.95 L675.12,371.64 A5.0,5.0 0 1 1 680.39,366.37 Z" fill="#0bc3f5"/><path d="M713.95,371.95 L710.22,367.78 A5.0,5.0 0 1 1 717.68,367.78 Z" fill="#0bc3f5"/><path d="M747.20,371.95 L747.51,366.37 A5.0,5.0 0 1 1 752.78,371.64 Z" fill="#0bc3f5"/><path d="M681.30,400.10 L677.13,403.83 A5.0,5.0 0 1 1 677.13,396.37 Z" fill="#0bc3f5"/><path d="M746.60,400.10 L750.77,396.37 A5.0,5.0 0 1 1 750.77,403.83 Z" fill="#0bc3f5"/><path d="M680.70,427.35 L680.39,432.93 A5.0,5.0 0 1 1 675.12,427.66 Z" fill="#0bc3f5"/><path d="M713.95,427.15 L717.68,431.32 A5.0,5.0 0 1 1 710.22,431.32 Z" fill="#0bc3f5"/><path d="M747.20,427.35 L752.78,427.66 A5.0,5.0 0 1 1 747.51,432.93 Z" fill="#0bc3f5"/><path d="M713.39,335.80 A3.2,3.2 0 1 1 717.15,332.65" fill="none" stroke="#0bc3f5" stroke-width="1.5" stroke-linecap="round"/><circle cx="717.15" cy="332.85" r="1.25" fill="#0bc3f5"/><path d="M759.90,371.95 L754.32,371.64 A5.0,5.0 0 1 1 759.59,366.37 Z" fill="#0bc3f5"/><path d="M793.15,371.95 L789.42,367.78 A5.0,5.0 0 1 1 796.88,367.78 Z" fill="#0bc3f5"/><path d="M826.40,371.95 L826.71,366.37 A5.0,5.0 0 1 1 831.98,371.64 Z" fill="#0bc3f5"/><path d="M760.50,400.10 L756.33,403.83 A5.0,5.0 0 1 1 756.33,396.37 Z" fill="#0bc3f5"/><path d="M825.80,400.10 L829.97,396.37 A5.0,5.0 0 1 1 829.97,403.83 Z" fill="#0bc3f5"/><path d="M759.90,427.35 L759.59,432.93 A5.0,5.0 0 1 1 754.32,427.66 Z" fill="#0bc3f5"/><path d="M793.15,427.15 L796.88,431.32 A5.0,5.0 0 1 1 789.42,431.32 Z" fill="#0bc3f5"/><path d="M826.40,427.35 L831.98,427.66 A5.0,5.0 0 1 1 826.71,432.93 Z" fill="#0bc3f5"/><path d="M792.59,335.80 A3.2,3.2 0 1 1 796.35,332.65" fill="none" stroke="#0bc3f5" stroke-width="1.5" stroke-linecap="round"/><circle cx="796.35" cy="332.85" r="1.25" fill="#0bc3f5"/><path d="M839.10,371.95 L833.52,371.64 A5.0,5.0 0 1 1 838.79,366.37 Z" fill="#0bc3f5"/><path d="M872.35,371.95 L868.62,367.78 A5.0,5.0 0 1 1 876.08,367.78 Z" fill="#0bc3f5"/><path d="M905.60,371.95 L905.91,366.37 A5.0,5.0 0 1 1 911.18,371.64 Z" fill="#0bc3f5"/><path d="M839.70,400.10 L835.53,403.83 A5.0,5.0 0 1 1 835.53,396.37 Z" fill="#0bc3f5"/><path d="M905.00,400.10 L909.17,396.37 A5.0,5.0 0 1 1 909.17,403.83 Z" fill="#0bc3f5"/><path d="M839.10,427.35 L838.79,432.93 A5.0,5.0 0 1 1 833.52,427.66 Z" fill="#0bc3f5"/><path d="M872.35,427.15 L876.08,431.32 A5.0,5.0 0 1 1 868.62,431.32 Z" fill="#0bc3f5"/><path d="M905.60,427.35 L911.18,427.66 A5.0,5.0 0 1 1 905.91,432.93 Z" fill="#0bc3f5"/><path d="M871.79,335.80 A3.2,3.2 0 1 1 875.55,332.65" fill="none" stroke="#0bc3f5" stroke-width="1.5" stroke-linecap="round"/><circle cx="875.55" cy="332.85" r="1.25" fill="#0bc3f5"/><path d="M918.30,371.95 L912.72,371.64 A5.0,5.0 0 1 1 917.99,366.37 Z" fill="#0bc3f5"/><path d="M951.55,371.95 L947.82,367.78 A5.0,5.0 0 1 1 955.28,367.78 Z" fill="#0bc3f5"/><path d="M984.80,371.95 L985.11,366.37 A5.0,5.0 0 1 1 990.38,371.64 Z" fill="#0bc3f5"/><path d="M918.90,400.10 L914.73,403.83 A5.0,5.0 0 1 1 914.73,396.37 Z" fill="#0bc3f5"/><path d="M984.20,400.10 L988.37,396.37 A5.0,5.0 0 1 1 988.37,403.83 Z" fill="#0bc3f5"/><path d="M918.30,427.35 L917.99,432.93 A5.0,5.0 0 1 1 912.72,427.66 Z" fill="#0bc3f5"/><path d="M951.55,427.15 L955.28,431.32 A5.0,5.0 0 1 1 947.82,431.32 Z" fill="#0bc3f5"/><path d="M984.80,427.35 L990.38,427.66 A5.0,5.0 0 1 1 985.11,432.93 Z" fill="#0bc3f5"/><path d="M950.99,335.80 A3.2,3.2 0 1 1 954.75,332.65" fill="none" stroke="#0bc3f5" stroke-width="1.5" stroke-linecap="round"/><circle cx="954.75" cy="332.85" r="1.25" fill="#0bc3f5"/><path d="M522.30,454.70 L516.72,454.39 A5.0,5.0 0 1 1 521.99,449.12 Z" fill="#0bc3f5"/><path d="M555.55,454.70 L551.82,450.53 A5.0,5.0 0 1 1 559.28,450.53 Z" fill="#0bc3f5"/><path d="M588.80,454.70 L589.11,449.12 A5.0,5.0 0 1 1 594.38,454.39 Z" fill="#0bc3f5"/><path d="M522.90,482.85 L518.73,486.58 A5.0,5.0 0 1 1 518.73,479.12 Z" fill="#0bc3f5"/><path d="M588.20,482.85 L592.37,479.12 A5.0,5.0 0 1 1 592.37,486.58 Z" fill="#0bc3f5"/><path d="M522.30,510.10 L521.99,515.68 A5.0,5.0 0 1 1 516.72,510.41 Z" fill="#0bc3f5"/><path d="M555.55,509.90 L559.28,514.07 A5.0,5.0 0 1 1 551.82,514.07 Z" fill="#0bc3f5"/><path d="M588.80,510.10 L594.38,510.41 A5.0,5.0 0 1 1 589.11,515.68 Z" fill="#0bc3f5"/><path d="M554.99,418.55 A3.2,3.2 0 1 1 558.75,415.40" fill="none" stroke="#0bc3f5" stroke-width="1.5" stroke-linecap="round"/><circle cx="558.75" cy="415.60" r="1.25" fill="#0bc3f5"/><path d="M601.50,454.70 L595.92,454.39 A5.0,5.0 0 1 1 601.19,449.12 Z" fill="#0bc3f5"/><path d="M634.75,454.70 L631.02,450.53 A5.0,5.0 0 1 1 638.48,450.53 Z" fill="#0bc3f5"/><path d="M668.00,454.70 L668.31,449.12 A5.0,5.0 0 1 1 673.58,454.39 Z" fill="#0bc3f5"/><path d="M602.10,482.85 L597.93,486.58 A5.0,5.0 0 1 1 597.93,479.12 Z" fill="#0bc3f5"/><path d="M667.40,482.85 L671.57,479.12 A5.0,5.0 0 1 1 671.57,486.58 Z" fill="#0bc3f5"/><path d="M601.50,510.10 L601.19,515.68 A5.0,5.0 0 1 1 595.92,510.41 Z" fill="#0bc3f5"/><path d="M634.75,509.90 L638.48,514.07 A5.0,5.0 0 1 1 631.02,514.07 Z" fill="#0bc3f5"/><path d="M668.00,510.10 L673.58,510.41 A5.0,5.0 0 1 1 668.31,515.68 Z" fill="#0bc3f5"/><path d="M634.19,418.55 A3.2,3.2 0 1 1 637.95,415.40" fill="none" stroke="#0bc3f5" stroke-width="1.5" stroke-linecap="round"/><circle cx="637.95" cy="415.60" r="1.25" fill="#0bc3f5"/><path d="M680.70,454.70 L675.12,454.39 A5.0,5.0 0 1 1 680.39,449.12 Z" fill="#0bc3f5"/><path d="M713.95,454.70 L710.22,450.53 A5.0,5.0 0 1 1 717.68,450.53 Z" fill="#0bc3f5"/><path d="M747.20,454.70 L747.51,449.12 A5.0,5.0 0 1 1 752.78,454.39 Z" fill="#0bc3f5"/><path d="M681.30,482.85 L677.13,486.58 A5.0,5.0 0 1 1 677.13,479.12 Z" fill="#0bc3f5"/><path d="M746.60,482.85 L750.77,479.12 A5.0,5.0 0 1 1 750.77,486.58 Z" fill="#0bc3f5"/><path d="M680.70,510.10 L680.39,515.68 A5.0,5.0 0 1 1 675.12,510.41 Z" fill="#0bc3f5"/><path d="M713.95,509.90 L717.68,514.07 A5.0,5.0 0 1 1 710.22,514.07 Z" fill="#0bc3f5"/><path d="M747.20,510.10 L752.78,510.41 A5.0,5.0 0 1 1 747.51,515.68 Z" fill="#0bc3f5"/><path d="M713.39,418.55 A3.2,3.2 0 1 1 717.15,415.40" fill="none" stroke="#0bc3f5" stroke-width="1.5" stroke-linecap="round"/><circle cx="717.15" cy="415.60" r="1.25" fill="#0bc3f5"/><path d="M759.90,454.70 L754.32,454.39 A5.0,5.0 0 1 1 759.59,449.12 Z" fill="#0bc3f5"/><path d="M793.15,454.70 L789.42,450.53 A5.0,5.0 0 1 1 796.88,450.53 Z" fill="#0bc3f5"/><path d="M826.40,454.70 L826.71,449.12 A5.0,5.0 0 1 1 831.98,454.39 Z" fill="#0bc3f5"/><path d="M760.50,482.85 L756.33,486.58 A5.0,5.0 0 1 1 756.33,479.12 Z" fill="#0bc3f5"/><path d="M825.80,482.85 L829.97,479.12 A5.0,5.0 0 1 1 829.97,486.58 Z" fill="#0bc3f5"/><path d="M759.90,510.10 L759.59,515.68 A5.0,5.0 0 1 1 754.32,510.41 Z" fill="#0bc3f5"/><path d="M793.15,509.90 L796.88,514.07 A5.0,5.0 0 1 1 789.42,514.07 Z" fill="#0bc3f5"/><path d="M826.40,510.10 L831.98,510.41 A5.0,5.0 0 1 1 826.71,515.68 Z" fill="#0bc3f5"/><path d="M792.59,418.55 A3.2,3.2 0 1 1 796.35,415.40" fill="none" stroke="#0bc3f5" stroke-width="1.5" stroke-linecap="round"/><circle cx="796.35" cy="415.60" r="1.25" fill="#0bc3f5"/><path d="M839.10,454.70 L833.52,454.39 A5.0,5.0 0 1 1 838.79,449.12 Z" fill="#0bc3f5"/><path d="M872.35,454.70 L868.62,450.53 A5.0,5.0 0 1 1 876.08,450.53 Z" fill="#0bc3f5"/><path d="M905.60,454.70 L905.91,449.12 A5.0,5.0 0 1 1 911.18,454.39 Z" fill="#0bc3f5"/><path d="M839.70,482.85 L835.53,486.58 A5.0,5.0 0 1 1 835.53,479.12 Z" fill="#0bc3f5"/><path d="M905.00,482.85 L909.17,479.12 A5.0,5.0 0 1 1 909.17,486.58 Z" fill="#0bc3f5"/><path d="M839.10,510.10 L838.79,515.68 A5.0,5.0 0 1 1 833.52,510.41 Z" fill="#0bc3f5"/><path d="M872.35,509.90 L876.08,514.07 A5.0,5.0 0 1 1 868.62,514.07 Z" fill="#0bc3f5"/><path d="M905.60,510.10 L911.18,510.41 A5.0,5.0 0 1 1 905.91,515.68 Z" fill="#0bc3f5"/><path d="M871.79,418.55 A3.2,3.2 0 1 1 875.55,415.40" fill="none" stroke="#0bc3f5" stroke-width="1.5" stroke-linecap="round"/><circle cx="875.55" cy="415.60" r="1.25" fill="#0bc3f5"/><path d="M918.30,454.70 L912.72,454.39 A5.0,5.0 0 1 1 917.99,449.12 Z" fill="#0bc3f5"/><path d="M951.55,454.70 L947.82,450.53 A5.0,5.0 0 1 1 955.28,450.53 Z" fill="#0bc3f5"/><path d="M984.80,454.70 L985.11,449.12 A5.0,5.0 0 1 1 990.38,454.39 Z" fill="#0bc3f5"/><path d="M918.90,482.85 L914.73,486.58 A5.0,5.0 0 1 1 914.73,479.12 Z" fill="#0bc3f5"/><path d="M984.20,482.85 L988.37,479.12 A5.0,5.0 0 1 1 988.37,486.58 Z" fill="#0bc3f5"/><path d="M918.30,510.10 L917.99,515.68 A5.0,5.0 0 1 1 912.72,510.41 Z" fill="#0bc3f5"/><path d="M951.55,509.90 L955.28,514.07 A5.0,5.0 0 1 1 947.82,514.07 Z" fill="#0bc3f5"/><path d="M984.80,510.10 L990.38,510.41 A5.0,5.0 0 1 1 985.11,515.68 Z" fill="#0bc3f5"/><path d="M950.99,418.55 A3.2,3.2 0 1 1 954.75,415.40" fill="none" stroke="#0bc3f5" stroke-width="1.5" stroke-linecap="round"/><circle cx="954.75" cy="415.60" r="1.25" fill="#0bc3f5"/><rect x="520.30" y="288.50" width="70.5" height="57.7" fill="none" stroke="#36c43a" stroke-width="1.1" stroke-dasharray="3.2 2.4"/><path d="M522.30,289.20 L516.72,288.89 A5.0,5.0 0 1 1 521.99,283.62 Z" fill="#36c43a"/><path d="M555.55,289.20 L551.82,285.03 A5.0,5.0 0 1 1 559.28,285.03 Z" fill="#36c43a"/><path d="M588.80,289.20 L589.11,283.62 A5.0,5.0 0 1 1 594.38,288.89 Z" fill="#36c43a"/><path d="M522.90,317.35 L518.73,321.08 A5.0,5.0 0 1 1 518.73,313.62 Z" fill="#36c43a"/><path d="M588.20,317.35 L592.37,313.62 A5.0,5.0 0 1 1 592.37,321.08 Z" fill="#36c43a"/><path d="M522.30,344.60 L521.99,350.18 A5.0,5.0 0 1 1 516.72,344.91 Z" fill="#36c43a"/><path d="M555.55,344.40 L559.28,348.57 A5.0,5.0 0 1 1 551.82,348.57 Z" fill="#36c43a"/><path d="M588.80,344.60 L594.38,344.91 A5.0,5.0 0 1 1 589.11,350.18 Z" fill="#36c43a"/><path d="M554.99,253.05 A3.2,3.2 0 1 1 558.75,249.90" fill="none" stroke="#36c43a" stroke-width="1.5" stroke-linecap="round"/><circle cx="558.75" cy="250.10" r="1.25" fill="#36c43a"/></svg><svg style="left:0;top:0" width="60" height="18"><circle cx="11" cy="8.5" r="5.2" fill="#fc5f57" stroke="#e2463f" stroke-width="0.5"/><circle cx="11" cy="8.5" r="1.3" fill="#4d0000"/><circle cx="26.6" cy="8.5" r="5.2" fill="#fdbb2e" stroke="#e1a116" stroke-width="0.5"/><circle cx="42.1" cy="8.5" r="5.2" fill="#28c840" stroke="#1aab29" stroke-width="0.5"/></svg><div class="btn" style="left:7px;top:19.5px;width:118px;height:14.5px"></div><div class="abs" style="left:46px;top:19px;width:41px;height:15px;background:#6b6b6b"></div><div class="abs" style="left:86.5px;top:20px;width:0.5px;height:13.5px;background:#d8d8d8"></div><svg style="left:20px;top:21px" width="12" height="12" viewBox="0 0 12 12"><path d="M6,0.8 L10.5,5 L6,9.2 L1.5,5 Z" fill="none" stroke="#d66ee0" stroke-width="1"/><path d="M2.5,6.5 L6,9.8 L9.5,6.5" fill="none" stroke="#c45ad8" stroke-width="1.1"/><path d="M3.8,3.8 L6,6 L8.2,3.8" fill="none" stroke="#d66ee0" stroke-width="1"/><circle cx="6" cy="10" r="1.4" fill="#8b3fc9"/></svg><svg style="left:61px;top:21px" width="12" height="12" viewBox="0 0 12 12"><path d="M4,0.8 L8.5,0.8 L10.3,2.6 L10.3,8.5 L4,8.5 Z" fill="#e0e0e0" stroke="#9a9a9a" stroke-width="0.5"/><path d="M1.8,3 L6.3,3 L8,4.7 L8,11 L1.8,11 Z" fill="#fff"/></svg><svg style="left:100px;top:21px" width="13" height="12" viewBox="0 0 13 12"><path d="M1,8 L9,6.5 L11.5,8.5 L3.5,10.5 Z" fill="#f5a623"/><path d="M1,5.5 L9,4 L11.5,6 L3.5,8 Z" fill="#4aa3f0"/><path d="M1,3 L9,1.2 L11.5,3.5 L3.5,5.5 Z" fill="#6fd23a"/></svg><div class="lbl" style="left:-33.5px;width:120px;text-align:center;top:35px;font-size:8.6px;color:#2e2e2e">Solutions</div><div class="lbl" style="left:6.5px;width:120px;text-align:center;top:35px;font-size:8.6px;color:#2e2e2e">Pages</div><div class="lbl" style="left:46.5px;width:120px;text-align:center;top:35px;font-size:8.6px;color:#2e2e2e">Layers</div><div class="btn" style="left:164px;top:19.7px;width:33px;height:14.3px"></div><svg style="left:171px;top:21.5px" width="20" height="11" viewBox="0 0 20 11"><path d="M16,9.5 C16,4 12,3.8 5,3.8" fill="none" stroke="#3e3e3e" stroke-width="1.8" stroke-linecap="round"/><path d="M6.5,0.5 L1.2,3.8 L6.5,7 Z" fill="#3e3e3e"/></svg><div class="btn" style="left:205px;top:19.7px;width:33px;height:14.3px"></div><svg style="left:213px;top:21.5px" width="20" height="11" viewBox="0 0 20 11"><path d="M3.5,9.5 C3.5,4 7.5,3.8 14.5,3.8" fill="none" stroke="#9c9c9c" stroke-width="1.8" stroke-linecap="round"/><path d="M13,0.5 L18.3,3.8 L13,7 Z" fill="#9c9c9c"/></svg><div class="abs" style="left:245px;top:19px;width:34px;height:15px;border-radius:4px;background:#6a6a6a"></div><svg style="left:256px;top:20.5px" width="12" height="12" viewBox="0 0 12 12"><rect x="1.5" y="0.5" width="9" height="11" fill="#6fb3f7" stroke="#3d8be0" stroke-width="0.5"/><g fill="#1d4fa0"><rect x="3" y="3" width="1.3" height="1.3"/><rect x="5.3" y="3" width="1.3" height="1.3"/><rect x="7.6" y="3" width="1.3" height="1.3"/><rect x="3" y="5.5" width="1.3" height="1.3"/><rect x="5.3" y="5.5" width="1.3" height="1.3"/><rect x="7.6" y="5.5" width="1.3" height="1.3"/><rect x="3" y="8" width="1.3" height="1.3"/><rect x="5.3" y="8" width="1.3" height="1.3"/><rect x="7.6" y="8" width="1.3" height="1.3"/></g></svg><div class="lbl" style="left:120.5px;width:120px;text-align:center;top:35px;font-size:8.6px;color:#2e2e2e">Undo</div><div class="lbl" style="left:161.5px;width:120px;text-align:center;top:35px;font-size:8.6px;color:#9a9a9a">Redo</div><div class="lbl" style="left:202px;width:120px;text-align:center;top:35px;font-size:8.6px;color:#2e2e2e">Library</div><div class="abs" style="left:632px;top:2px;font-size:10.8px;line-height:13px;color:#3c3c3c;white-space:nowrap">Ground floor office plan - Interior design <span style="color:#a8a8a8">— Edited</span></div><svg style="left:873px;top:7px" width="8" height="5" viewBox="0 0 8 5"><path d="M1,1 L4,3.8 L7,1" fill="none" stroke="#a8a8a8" stroke-width="1"/></svg><div class="btn" style="left:682.5px;top:19.6px;width:32.299999999999955px;height:14.6px"></div><div class="lbl" style="left:638.65px;width:120px;text-align:center;top:35px;font-size:8.6px;color:#2e2e2e">Smart</div><div class="btn" style="left:723px;top:19.6px;width:33px;height:14.6px"></div><div class="lbl" style="left:679.5px;width:120px;text-align:center;top:35px;font-size:8.6px;color:#2e2e2e">Chain</div><div class="btn" style="left:763.7px;top:19.6px;width:32.299999999999955px;height:14.6px"></div><div class="lbl" style="left:719.85px;width:120px;text-align:center;top:35px;font-size:8.6px;color:#2e2e2e">Tree</div><svg style="left:690px;top:20px" width="18" height="13" viewBox="0 0 18 13"><rect x="2.5" y="1.5" width="4.5" height="3" fill="#7fb0e8" stroke="#1f4f9f" stroke-width="0.9"/><path d="M7,3 L10.5,3 L10.5,8" fill="none" stroke="#1f4f9f" stroke-width="0.9"/><rect x="8.3" y="8" width="4.5" height="3.5" fill="#7fb0e8" stroke="#1f4f9f" stroke-width="0.9"/></svg><svg style="left:731px;top:20px" width="18" height="13" viewBox="0 0 18 13"><rect x="0.8" y="1.5" width="3.5" height="2.5" fill="#5fd03a" stroke="#2e7a1c" stroke-width="0.8"/><rect x="7" y="1.5" width="3.5" height="2.5" fill="#7fb0e8" stroke="#1f4f9f" stroke-width="0.8"/><path d="M4.3,2.8 L7,2.8 M8.7,4 L8.7,8.5 L12,8.5" fill="none" stroke="#1f4f9f" stroke-width="0.8"/><rect x="7" y="7.5" width="3" height="2.5" fill="#7fb0e8" stroke="#1f4f9f" stroke-width="0.8"/><rect x="12" y="7.5" width="3.5" height="2.5" fill="#7fb0e8" stroke="#1f4f9f" stroke-width="0.8"/></svg><svg style="left:771px;top:20px" width="18" height="13" viewBox="0 0 18 13"><rect x="7.2" y="0.8" width="3.2" height="2.6" fill="#5fd03a" stroke="#2e7a1c" stroke-width="0.8"/><path d="M8.8,3.4 V5.8 M3.5,8 V5.8 H14 V8 M8.8,5.8 V8" fill="none" stroke="#1f4f9f" stroke-width="0.8"/><rect x="1.8" y="8" width="3.3" height="3" fill="#7fb0e8" stroke="#1f4f9f" stroke-width="0.8"/><rect x="7.2" y="8" width="3.3" height="3" fill="#7fb0e8" stroke="#1f4f9f" stroke-width="0.8"/><rect x="12.4" y="8" width="3.3" height="3" fill="#7fb0e8" stroke="#1f4f9f" stroke-width="0.8"/></svg><div class="abs" style="left:1200px;top:19px;width:34px;height:15.4px;border-radius:4px;background:#6a6a6a"></div><svg style="left:1208px;top:20.5px" width="18" height="12" viewBox="0 0 18 12"><path d="M2,1.5 H16" stroke="#e07050" stroke-width="0.8"/><path d="M4.5,0.5 V11" stroke="#e07050" stroke-width="0.8"/><circle cx="5" cy="7" r="3" fill="#f0f0f0"/><circle cx="5" cy="7" r="1.2" fill="#6a6a6a"/><rect x="9" y="3.5" width="7.5" height="6.5" fill="#3fba2a" stroke="#1a6e10" stroke-width="0.7"/><rect x="10.5" y="5.5" width="4.5" height="3" fill="#2e9e1f"/></svg><div class="btn" style="left:1241px;top:19.5px;width:32.7px;height:14.8px"></div><svg style="left:1249px;top:20.5px" width="18" height="13" viewBox="0 0 18 13"><g stroke="#6ea0e0" stroke-width="0.8" fill="none"><path d="M1,1 H15 M1,4.5 H15 M1,8 H11 M1,11.5 H10"/><path d="M1.5,0.5 V12 M5,0.5 V12 M8.5,0.5 V12 M12,0.5 V6"/></g><path d="M9.5,9 Q13,5.5 16.5,9 Q13,12.5 9.5,9 Z" fill="#fff" stroke="#222" stroke-width="0.9"/><circle cx="13" cy="9" r="1.4" fill="#222"/></svg><div class="lbl" style="left:1157px;width:120px;text-align:center;top:35px;font-size:8.6px;color:#2e2e2e">Snap</div><div class="lbl" style="left:1197.4px;width:120px;text-align:center;top:35px;font-size:8.6px;color:#2e2e2e">Grid</div><div class="btn" style="left:1312.3px;top:19.3px;width:174.7px;height:15px"></div><div class="abs" style="left:1312.3px;top:19px;width:40.5px;height:15.3px;border-radius:4px 0 0 4px;background:#6a6a6a"></div><div class="abs" style="left:1400.2px;top:20px;width:0.6px;height:13.5px;background:#dadada"></div><div class="abs" style="left:1440.3px;top:20px;width:0.6px;height:13.5px;background:#dadada"></div><svg style="left:1322px;top:20.5px" width="22" height="12" viewBox="0 0 22 12"><path d="M7,1 C2,1 0.5,5 1.5,8 C2.5,10.5 5,11 6,9.5 C7,8 8,8.5 9.5,9 C12,9.5 14,7 13.5,4.5 C13,2 10.5,1 7,1 Z" fill="#fff"/><circle cx="4.5" cy="4" r="1.2" fill="#6a6a6a"/><circle cx="7.5" cy="3" r="1.2" fill="#6a6a6a"/><circle cx="10.5" cy="4.5" r="1.2" fill="#6a6a6a"/><circle cx="4" cy="7" r="1.2" fill="#6a6a6a"/><path d="M15,11 L19.5,1" stroke="#fff" stroke-width="1.6"/></svg><svg style="left:1368px;top:20.5px" width="20" height="13" viewBox="0 0 20 13"><rect x="1" y="0.8" width="8" height="9" fill="#fff" stroke="#333" stroke-width="1"/><path d="M2.5,3 H7.5 M2.5,5 H7.5 M2.5,7 H5" stroke="#333" stroke-width="0.8"/><rect x="2" y="2" width="4" height="4" fill="#444"/><circle cx="11.5" cy="10" r="1.7" fill="none" stroke="#333" stroke-width="0.9"/><circle cx="16" cy="10" r="1.7" fill="none" stroke="#333" stroke-width="0.9"/></svg><svg style="left:1413px;top:20.5px" width="14" height="13" viewBox="0 0 14 13"><circle cx="7" cy="6.2" r="5.6" fill="#2a2a2a"/><circle cx="7" cy="3.4" r="0.95" fill="#fff"/><rect x="6.15" y="5" width="1.7" height="4.6" fill="#fff"/></svg><svg style="left:1455px;top:21px" width="18" height="12" viewBox="0 0 18 12"><rect x="1" y="1" width="16" height="10" fill="#2a2a2a"/><rect x="3" y="2.5" width="12" height="7" fill="#fff"/><path d="M7,3.5 L11.5,6 L7,8.5 Z" fill="#2a2a2a"/></svg><div class="lbl" style="left:1272.5px;width:120px;text-align:center;top:35px;font-size:8.6px;color:#2e2e2e">Format</div><div class="lbl" style="left:1316.5px;width:120px;text-align:center;top:35px;font-size:8.6px;color:#2e2e2e">Hypernote</div><div class="lbl" style="left:1360px;width:120px;text-align:center;top:35px;font-size:8.6px;color:#2e2e2e">Info</div><div class="lbl" style="left:1403.5px;width:120px;text-align:center;top:35px;font-size:8.6px;color:#2e2e2e">Present</div><div class="abs" style="left:28px;top:53.2px;width:284.4px;height:16.6px;border-radius:4px;background:linear-gradient(#fbfbfb,#f2f2f2);box-shadow:0 0 0 0.6px rgba(0,0,0,.13),0 0.6px 0.6px rgba(0,0,0,.15)"></div><div class="abs" style="left:28px;top:53.2px;width:24px;height:16.6px;border-radius:4px 0 0 4px;background:#6b6b6b"></div><div class="abs" style="left:75.4px;top:54px;width:0.7px;height:14px;background:#e4e4e4"></div><div class="abs" style="left:99px;top:54px;width:0.7px;height:14px;background:#e4e4e4"></div><div class="abs" style="left:122px;top:54px;width:0.7px;height:14px;background:#e4e4e4"></div><div class="abs" style="left:145px;top:54px;width:0.7px;height:14px;background:#e4e4e4"></div><div class="abs" style="left:168px;top:54px;width:0.7px;height:14px;background:#e4e4e4"></div><div class="abs" style="left:197px;top:54px;width:0.7px;height:14px;background:#e4e4e4"></div><div class="abs" style="left:226px;top:54px;width:0.7px;height:14px;background:#e4e4e4"></div><div class="abs" style="left:255px;top:54px;width:0.7px;height:14px;background:#e4e4e4"></div><div class="abs" style="left:284.4px;top:54px;width:0.7px;height:14px;background:#e4e4e4"></div><div class="abs" style="left:344px;top:53.2px;width:122.69999999999999px;height:16.6px;border-radius:4px;background:linear-gradient(#fbfbfb,#f2f2f2);box-shadow:0 0 0 0.6px rgba(0,0,0,.13),0 0.6px 0.6px rgba(0,0,0,.15)"></div><div class="abs" style="left:365.8px;top:54px;width:0.7px;height:14px;background:#e4e4e4"></div><div class="abs" style="left:387.4px;top:54px;width:0.7px;height:14px;background:#e4e4e4"></div><div class="abs" style="left:409.8px;top:54px;width:0.7px;height:14px;background:#e4e4e4"></div><div class="abs" style="left:438.6px;top:54px;width:0.7px;height:14px;background:#e4e4e4"></div><div class="abs" style="left:504px;top:53.2px;width:87px;height:16.6px;border-radius:4px;background:linear-gradient(#fbfbfb,#f2f2f2);box-shadow:0 0 0 0.6px rgba(0,0,0,.13),0 0.6px 0.6px rgba(0,0,0,.15)"></div><div class="abs" style="left:526px;top:54px;width:0.7px;height:14px;background:#e4e4e4"></div><div class="abs" style="left:547.9px;top:54px;width:0.7px;height:14px;background:#e4e4e4"></div><div class="abs" style="left:569.4px;top:54px;width:0.7px;height:14px;background:#e4e4e4"></div><svg style="left:0;top:0" width="320" height="73" viewBox="0 0 320 73"><path d="M37.8,56 L37.8,66 L40.2,63.8 L42,67.3 L43.6,66.5 L41.9,63.1 L45,62.8 Z" fill="#fff"/><rect x="58.5" y="56.5" width="11.5" height="11" fill="#e6e6e6" stroke="#333" stroke-width="0.8" stroke-dasharray="1 1"/><text x="64.3" y="65.3" font-family="Liberation Serif" font-weight="bold" font-size="9" text-anchor="middle" fill="#222">T</text><rect x="81.2" y="57.2" width="12.8" height="9.4" rx="1" fill="#b4b4b4" stroke="#4a4a4a" stroke-width="0.9"/><ellipse cx="110" cy="61.6" rx="7" ry="5.3" fill="#b4b4b4" stroke="#4a4a4a" stroke-width="0.9"/><rect x="128.2" y="57.2" width="11" height="9.8" fill="#fff" stroke="#4a4a4a" stroke-width="0.9"/><rect x="130.5" y="59.3" width="6.5" height="5.6" fill="#a8a8a8"/><path d="M151.2,67.6 L161,57.8" stroke="#2e2e2e" stroke-width="1.1"/><path d="M163.2,55.6 L162.4,61.2 L157.6,56.4 Z" fill="#2e2e2e"/><path d="M177.6,56.6 L188.2,67.4" stroke="#333" stroke-width="1"/><circle cx="177.6" cy="56.6" r="1.1" fill="#333"/><circle cx="188.2" cy="67.4" r="1.1" fill="#333"/><path d="M206.8,56.8 Q216.5,57.5 217.2,67.2" fill="none" stroke="#333" stroke-width="1"/><circle cx="206.8" cy="56.8" r="1.1" fill="#333"/><circle cx="217.2" cy="67.2" r="1.1" fill="#333"/><path d="M235.5,67.5 L237,62 L242,57.8 L245.2,61 L241,66 Z" fill="#2e2e2e"/><path d="M242.8,56.8 L244.3,55.3 L247.2,58.3 L245.8,59.8 Z" fill="#2e2e2e"/><circle cx="239.8" cy="62.8" r="0.8" fill="#eee"/><path d="M264,67.3 L268.5,59 L275,56.3" fill="none" stroke="#333" stroke-width="1"/><circle cx="264" cy="67.3" r="1.1" fill="#333"/><circle cx="275" cy="56.3" r="1.1" fill="#333"/><circle cx="268.5" cy="59" r="1" fill="#333"/><path d="M269.8,61.2 L269.8,67.2 L271.3,65.8 L272.5,68 L273.5,67.5 L272.4,65.3 L274.4,65.1 Z" fill="#222"/><rect x="293" y="56.5" width="11" height="10.5" rx="0.8" fill="#b4b4b4" stroke="#4a4a4a" stroke-width="0.9"/><circle cx="304" cy="61.8" r="2" fill="#f4f4f4" stroke="#4a4a4a" stroke-width="0.7"/></svg><svg style="left:330px;top:50px" width="420" height="23" viewBox="330 50 420 23"><path d="M349.5,62.3 L356,56 Q361.5,61 356,67" fill="none" stroke="#333" stroke-width="1"/><circle cx="349.5" cy="62.3" r="1" fill="#333"/><circle cx="356" cy="56" r="1" fill="#333"/><circle cx="356" cy="67" r="1" fill="#333"/><rect x="371.5" y="56.5" width="6" height="6" fill="#c8c8c8" stroke="#444" stroke-width="0.8"/><rect x="375.5" y="60.5" width="6" height="6" fill="#a8a8a8" stroke="#444" stroke-width="0.8"/><circle cx="371" cy="56" r="0.9" fill="#333"/><circle cx="382" cy="56" r="0.9" fill="#333"/><circle cx="371" cy="67" r="0.9" fill="#333"/><circle cx="382" cy="67" r="0.9" fill="#333"/><rect x="393" y="56" width="6" height="6" fill="#c8c8c8" stroke="#444" stroke-width="0.8"/><rect x="397" y="60" width="6.5" height="6.5" fill="#a8a8a8" stroke="#444" stroke-width="0.8"/><circle cx="392.8" cy="55.8" r="0.9" fill="#333"/><circle cx="403.5" cy="66.5" r="0.9" fill="#333"/><path d="M417.8,67.3 L428.8,56.3" stroke="#333" stroke-width="1"/><circle cx="417.8" cy="67.3" r="1" fill="#333"/><circle cx="428.8" cy="56.3" r="1" fill="#333"/><circle cx="424.3" cy="60.8" r="0.9" fill="#333"/><path d="M428.6,62.5 V66.5 M426.6,64.5 H430.6" stroke="#333" stroke-width="1"/><path d="M446.5,67.2 L450,63.7 M452,61.7 L457.2,56.2" stroke="#333" stroke-width="1"/><circle cx="446.5" cy="67.2" r="1" fill="#333"/><circle cx="457.2" cy="56.2" r="1" fill="#333"/><path d="M450,67.5 L456.5,60" stroke="#333" stroke-width="0.9"/><path d="M449.5,59.5 L457,67.5" stroke="#333" stroke-width="0.9"/><circle cx="458" cy="60" r="1.4" fill="none" stroke="#333" stroke-width="0.7"/><circle cx="458" cy="67" r="1.4" fill="none" stroke="#333" stroke-width="0.7"/><circle cx="513.8" cy="60.6" r="3.8" fill="none" stroke="#333" stroke-width="1.1"/><path d="M516.6,63.4 L519.5,66.4" stroke="#333" stroke-width="1.7"/><path d="M532,66 Q530.5,62 531,59 L532,62 L532.3,56.5 L533.5,61 L534.3,55.8 L535.4,61 L536.5,56.5 L537,61.5 L538.6,58.5 Q538.5,64 536.5,67 Z" fill="#f6f6f6" stroke="#444" stroke-width="0.75"/><path d="M556.3,55.8 a2,2 0 0 1 2.5,0 l-0.3,4.2 h3.8 l0.3,2.4 h-9.8 l0.3,-2.4 h3.8 z" fill="#333"/><rect x="552.8" y="63.2" width="9.6" height="1.4" fill="#333"/><rect x="552.8" y="65.5" width="9.6" height="1.1" fill="#333"/><path d="M575.8,67.5 L583,59.8" stroke="#333" stroke-width="1.3"/><path d="M582,58 L584.3,55.7 a1.2,1.2 0 0 1 1.8,1.8 L583.8,59.8 Z" fill="#333"/><circle cx="630.2" cy="61.5" r="3.8" fill="#fff" stroke="#3a6fc0" stroke-width="1.3"/><path d="M628.2,61.5 H632.2" stroke="#3a6fc0" stroke-width="1.3"/><path d="M633,64.3 L636.2,67.5" stroke="#2a2a2a" stroke-width="1.7"/><rect x="642.5" y="61.3" width="71" height="1.4" rx="0.7" fill="#b9b9b9"/><rect x="642.5" y="61.2" width="28" height="1.6" rx="0.8" fill="#3c8ef0"/><circle cx="670.3" cy="62" r="3.9" fill="#fff" stroke="#c5c5c5" stroke-width="0.6"/><circle cx="726.5" cy="61.5" r="3.8" fill="#fff" stroke="#3a6fc0" stroke-width="1.3"/><path d="M724.5,61.5 H728.5 M726.5,59.5 V63.5" stroke="#3a6fc0" stroke-width="1.3"/><path d="M729.3,64.3 L732.5,67.5" stroke="#2a2a2a" stroke-width="1.7"/></svg><div class="abs" style="left:953.2px;top:484.1px;width:160.3px;height:172.7px;border-radius:5px;background:rgba(237,231,224,0.86);backdrop-filter:blur(8px);-webkit-backdrop-filter:blur(8px);box-shadow:0 0 0 0.5px rgba(0,0,0,.18),0 3px 9px rgba(0,0,0,.28)"></div><div class="abs" style="left:1114px;top:567.6px;width:149px;height:157.7px;border-radius:5px;background:rgba(237,231,224,0.86);backdrop-filter:blur(8px);-webkit-backdrop-filter:blur(8px);box-shadow:0 0 0 0.5px rgba(0,0,0,.18),0 3px 9px rgba(0,0,0,.28)"></div><div class="abs" style="left:953.2px;top:550.5px;width:160.29999999999995px;height:1.3px;background:rgba(160,150,140,0.45)"></div><div class="abs" style="left:953.2px;top:619.5px;width:160.29999999999995px;height:1.3px;background:rgba(160,150,140,0.45)"></div><div class="abs" style="left:1114px;top:604.8px;width:149px;height:1.3px;background:rgba(160,150,140,0.45)"></div><div class="abs" style="left:1114px;top:672.5px;width:149px;height:1.3px;background:rgba(160,150,140,0.45)"></div><div class="abs" style="left:953.2px;top:570.9px;width:160.3px;height:14.5px;background:#1d7ff2"></div><div class="abs" style="left:1114px;top:640px;width:149px;height:14.5px;background:#1d7ff2"></div><div class="mi" style="left:969.4px;top:486.5px;color:#1e1e1e">Cut</div><div class="mi" style="left:969.4px;top:501.5px;color:#1e1e1e">Copy</div><div class="mi" style="left:969.4px;top:516.5px;color:#1e1e1e">Paste</div><div class="mi" style="left:969.4px;top:531.5px;color:#1e1e1e">Delete</div><div class="mi" style="left:969.4px;top:555.5px;color:#1e1e1e">Fit To Text</div><div class="mi" style="left:969.4px;top:585.5px;color:#1e1e1e">Hypernote</div><div class="mi" style="left:969.4px;top:600.5px;color:#1e1e1e">Lock</div><div class="mi" style="left:969.4px;top:624.5px;color:#1e1e1e">Add Custom Properties</div><div class="mi" style="left:969.4px;top:639.5px;color:#1e1e1e">Power Edit</div><div class="mi" style="left:969.4px;top:570.5px;color:#fff">Object</div><div class="mi" style="left:1130.6px;top:570.5px;color:#1e1e1e">Send To Back</div><div class="mi" style="left:1130.6px;top:585.5px;color:#1e1e1e">Bring To Front</div><div class="mi" style="left:1130.6px;top:609.5px;color:#1e1e1e">Rotate Left (90º)</div><div class="mi" style="left:1130.6px;top:624.5px;color:#1e1e1e">Rotate Right (90º)</div><div class="mi" style="left:1130.6px;top:654.5px;color:#1e1e1e">Flip Vertical</div><div class="mi" style="left:1130.6px;top:678.5px;color:#1e1e1e">Edit Text</div><div class="mi" style="left:1130.6px;top:693.5px;color:#1e1e1e">Group</div><div class="mi" style="left:1130.6px;top:708.5px;color:#1e1e1e">Ungroup</div><div class="mi" style="left:1130.6px;top:639.5px;color:#fff">Flip Horizontal</div><svg style="left:1096px;top:573px" width="10" height="10" viewBox="0 0 10 10"><path d="M1.5,1 L8.5,5 L1.5,9 Z" fill="#fff"/></svg><svg style="left:1096px;top:603px" width="10" height="10" viewBox="0 0 10 10"><path d="M1.5,1 L8.5,5 L1.5,9 Z" fill="#222"/></svg><div class="mi" style="left:1247.8px;top:570.5px">B</div><svg style="left:1238.4px;top:573.7px" width="9" height="9" viewBox="0 0 9 9"><path d="M3,3 H6 V6 H3 Z M3,3 V1.8 A1.2,1.2 0 1 0 1.8,3 H3 M6,3 V1.8 A1.2,1.2 0 1 1 7.2,3 H6 M3,6 V7.2 A1.2,1.2 0 1 1 1.8,6 H3 M6,6 V7.2 A1.2,1.2 0 1 0 7.2,6 H6" fill="none" stroke="#222" stroke-width="0.75"/></svg><svg style="left:1226.5px;top:573.7px" width="10" height="9" viewBox="0 0 10 9"><path d="M0.5,1.5 H3 L6.8,7.5 H9.5 M5.8,1.5 H9.5" fill="none" stroke="#222" stroke-width="1"/></svg><div class="mi" style="left:1247.8px;top:585.5px">F</div><svg style="left:1238.4px;top:588.7px" width="9" height="9" viewBox="0 0 9 9"><path d="M3,3 H6 V6 H3 Z M3,3 V1.8 A1.2,1.2 0 1 0 1.8,3 H3 M6,3 V1.8 A1.2,1.2 0 1 1 7.2,3 H6 M3,6 V7.2 A1.2,1.2 0 1 1 1.8,6 H3 M6,6 V7.2 A1.2,1.2 0 1 0 7.2,6 H6" fill="none" stroke="#222" stroke-width="0.75"/></svg><svg style="left:1226.5px;top:588.7px" width="10" height="9" viewBox="0 0 10 9"><path d="M0.5,1.5 H3 L6.8,7.5 H9.5 M5.8,1.5 H9.5" fill="none" stroke="#222" stroke-width="1"/></svg><div class="mi" style="left:1247.8px;top:654.5px">J</div><svg style="left:1238.4px;top:657.7px" width="9" height="9" viewBox="0 0 9 9"><path d="M3,3 H6 V6 H3 Z M3,3 V1.8 A1.2,1.2 0 1 0 1.8,3 H3 M6,3 V1.8 A1.2,1.2 0 1 1 7.2,3 H6 M3,6 V7.2 A1.2,1.2 0 1 1 1.8,6 H3 M6,6 V7.2 A1.2,1.2 0 1 0 7.2,6 H6" fill="none" stroke="#222" stroke-width="0.75"/></svg><svg style="left:1226.5px;top:657.7px" width="10" height="9" viewBox="0 0 10 9"><path d="M0.5,1.5 H3 L6.8,7.5 H9.5 M5.8,1.5 H9.5" fill="none" stroke="#222" stroke-width="1"/></svg><div class="mi" style="left:1247.8px;top:609.5px">L</div><svg style="left:1238.2px;top:612.7px" width="9" height="9" viewBox="0 0 9 9"><path d="M3,3 H6 V6 H3 Z M3,3 V1.8 A1.2,1.2 0 1 0 1.8,3 H3 M6,3 V1.8 A1.2,1.2 0 1 1 7.2,3 H6 M3,6 V7.2 A1.2,1.2 0 1 1 1.8,6 H3 M6,6 V7.2 A1.2,1.2 0 1 0 7.2,6 H6" fill="none" stroke="#222" stroke-width="0.75"/></svg><div class="mi" style="left:1247.8px;top:624.5px">R</div><svg style="left:1238.2px;top:627.7px" width="9" height="9" viewBox="0 0 9 9"><path d="M3,3 H6 V6 H3 Z M3,3 V1.8 A1.2,1.2 0 1 0 1.8,3 H3 M6,3 V1.8 A1.2,1.2 0 1 1 7.2,3 H6 M3,6 V7.2 A1.2,1.2 0 1 1 1.8,6 H3 M6,6 V7.2 A1.2,1.2 0 1 0 7.2,6 H6" fill="none" stroke="#222" stroke-width="0.75"/></svg><div class="mi" style="left:1247.8px;top:693.5px">G</div><svg style="left:1238.2px;top:696.7px" width="9" height="9" viewBox="0 0 9 9"><path d="M3,3 H6 V6 H3 Z M3,3 V1.8 A1.2,1.2 0 1 0 1.8,3 H3 M6,3 V1.8 A1.2,1.2 0 1 1 7.2,3 H6 M3,6 V7.2 A1.2,1.2 0 1 1 1.8,6 H3 M6,6 V7.2 A1.2,1.2 0 1 0 7.2,6 H6" fill="none" stroke="#222" stroke-width="0.75"/></svg><div class="abs" style="left:1098.5px;top:642px;font-size:8.2px;line-height:10px;color:#222">F6</div><div class="abs" style="left:1248.5px;top:681px;font-size:8.2px;line-height:10px;color:#222">F5</div><svg style="left:0;top:73px" width="164" height="120" viewBox="0 73 164 120"><rect x="26.2" y="79.5" width="80.8" height="99.2" fill="#fff" stroke="#2d5eae" stroke-width="2"/><rect x="27.6" y="80.5" width="78" height="91.3" fill="#d3bb96"/><rect x="48.3" y="104.9" width="36.6" height="41.0" fill="#bea48a"/><rect x="28" y="80.8" width="12.5" height="9.5" fill="#8fcfb5"/><rect x="28" y="90.3" width="12.5" height="3" fill="#eee"/><rect x="92.8" y="160" width="12.5" height="9" fill="#8fcfb5"/><rect x="92.8" y="168.5" width="12.5" height="3" fill="#eee"/><rect x="41.3" y="86.5" width="13" height="13" fill="#c0a68a"/><path d="M53.3,87.3 h-10 v3 h4.5 l2.5,2.5 v6.5 h3 z" fill="#f4f4f4"/><circle cx="47.5" cy="93.3" r="1.7" fill="#4a2a3a"/><path d="M52.3,90.5 l-2,-2 l-1.5,1.5 l2,2 z" fill="#555"/><path d="M54.3,99.5 V86.5 H41.3 V94.5" fill="none" stroke="#3b2f26" stroke-width="0.7"/><rect x="54.3" y="86.5" width="13" height="13" fill="#c0a68a"/><path d="M66.3,87.3 h-10 v3 h4.5 l2.5,2.5 v6.5 h3 z" fill="#f4f4f4"/><circle cx="60.5" cy="93.3" r="1.7" fill="#4a2a3a"/><path d="M65.3,90.5 l-2,-2 l-1.5,1.5 l2,2 z" fill="#555"/><path d="M67.3,99.5 V86.5 H54.3 V94.5" fill="none" stroke="#3b2f26" stroke-width="0.7"/><rect x="67.3" y="86.5" width="13" height="13" fill="#c0a68a"/><path d="M79.3,87.3 h-10 v3 h4.5 l2.5,2.5 v6.5 h3 z" fill="#f4f4f4"/><circle cx="73.5" cy="93.3" r="1.7" fill="#4a2a3a"/><path d="M78.3,90.5 l-2,-2 l-1.5,1.5 l2,2 z" fill="#555"/><path d="M80.3,99.5 V86.5 H67.3 V94.5" fill="none" stroke="#3b2f26" stroke-width="0.7"/><rect x="28.2" y="93.5" width="13" height="13" fill="#c0a68a"/><path d="M29.2,94.3 h10 v3 h-4.5 l-2.5,2.5 v6.5 h-3 z" fill="#f4f4f4"/><circle cx="35.0" cy="100.3" r="1.7" fill="#4a2a3a"/><path d="M30.2,97.5 l2,-2 l1.5,1.5 l-2,2 z" fill="#555"/><path d="M28.2,106.5 V93.5 H41.2 V101.5" fill="none" stroke="#3b2f26" stroke-width="0.7"/><rect x="92.5" y="93.5" width="13" height="13" fill="#c0a68a"/><path d="M104.5,94.3 h-10 v3 h4.5 l2.5,2.5 v6.5 h3 z" fill="#f4f4f4"/><circle cx="98.7" cy="100.3" r="1.7" fill="#4a2a3a"/><path d="M103.5,97.5 l-2,-2 l-1.5,1.5 l2,2 z" fill="#555"/><path d="M105.5,106.5 V93.5 H92.5 V101.5" fill="none" stroke="#3b2f26" stroke-width="0.7"/><rect x="28.2" y="106.5" width="13" height="13" fill="#c0a68a"/><path d="M29.2,107.3 h10 v3 h-4.5 l-2.5,2.5 v6.5 h-3 z" fill="#f4f4f4"/><circle cx="35.0" cy="113.3" r="1.7" fill="#4a2a3a"/><path d="M30.2,110.5 l2,-2 l1.5,1.5 l-2,2 z" fill="#555"/><path d="M28.2,119.5 V106.5 H41.2 V114.5" fill="none" stroke="#3b2f26" stroke-width="0.7"/><rect x="92.5" y="106.5" width="13" height="13" fill="#c0a68a"/><path d="M104.5,107.3 h-10 v3 h4.5 l2.5,2.5 v6.5 h3 z" fill="#f4f4f4"/><circle cx="98.7" cy="113.3" r="1.7" fill="#4a2a3a"/><path d="M103.5,110.5 l-2,-2 l-1.5,1.5 l2,2 z" fill="#555"/><path d="M105.5,119.5 V106.5 H92.5 V114.5" fill="none" stroke="#3b2f26" stroke-width="0.7"/><rect x="28.2" y="119.5" width="13" height="13" fill="#c0a68a"/><path d="M29.2,120.3 h10 v3 h-4.5 l-2.5,2.5 v6.5 h-3 z" fill="#f4f4f4"/><circle cx="35.0" cy="126.3" r="1.7" fill="#4a2a3a"/><path d="M30.2,123.5 l2,-2 l1.5,1.5 l-2,2 z" fill="#555"/><path d="M28.2,132.5 V119.5 H41.2 V127.5" fill="none" stroke="#3b2f26" stroke-width="0.7"/><rect x="92.5" y="119.5" width="13" height="13" fill="#c0a68a"/><path d="M104.5,120.3 h-10 v3 h4.5 l2.5,2.5 v6.5 h3 z" fill="#f4f4f4"/><circle cx="98.7" cy="126.3" r="1.7" fill="#4a2a3a"/><path d="M103.5,123.5 l-2,-2 l-1.5,1.5 l2,2 z" fill="#555"/><path d="M105.5,132.5 V119.5 H92.5 V127.5" fill="none" stroke="#3b2f26" stroke-width="0.7"/><rect x="28.2" y="132.5" width="13" height="13" fill="#c0a68a"/><path d="M29.2,133.3 h10 v3 h-4.5 l-2.5,2.5 v6.5 h-3 z" fill="#f4f4f4"/><circle cx="35.0" cy="139.3" r="1.7" fill="#4a2a3a"/><path d="M30.2,136.5 l2,-2 l1.5,1.5 l-2,2 z" fill="#555"/><path d="M28.2,145.5 V132.5 H41.2 V140.5" fill="none" stroke="#3b2f26" stroke-width="0.7"/><rect x="92.5" y="132.5" width="13" height="13" fill="#c0a68a"/><path d="M104.5,133.3 h-10 v3 h4.5 l2.5,2.5 v6.5 h3 z" fill="#f4f4f4"/><circle cx="98.7" cy="139.3" r="1.7" fill="#4a2a3a"/><path d="M103.5,136.5 l-2,-2 l-1.5,1.5 l2,2 z" fill="#555"/><path d="M105.5,145.5 V132.5 H92.5 V140.5" fill="none" stroke="#3b2f26" stroke-width="0.7"/><rect x="28.2" y="145.5" width="13" height="13" fill="#c0a68a"/><path d="M29.2,146.3 h10 v3 h-4.5 l-2.5,2.5 v6.5 h-3 z" fill="#f4f4f4"/><circle cx="35.0" cy="152.3" r="1.7" fill="#4a2a3a"/><path d="M30.2,149.5 l2,-2 l1.5,1.5 l-2,2 z" fill="#555"/><path d="M28.2,158.5 V145.5 H41.2 V153.5" fill="none" stroke="#3b2f26" stroke-width="0.7"/><rect x="92.5" y="145.5" width="13" height="13" fill="#c0a68a"/><path d="M104.5,146.3 h-10 v3 h4.5 l2.5,2.5 v6.5 h3 z" fill="#f4f4f4"/><circle cx="98.7" cy="152.3" r="1.7" fill="#4a2a3a"/><path d="M103.5,149.5 l-2,-2 l-1.5,1.5 l2,2 z" fill="#555"/><path d="M105.5,158.5 V145.5 H92.5 V153.5" fill="none" stroke="#3b2f26" stroke-width="0.7"/><path d="M55.4,116.3 h3.1 v1.4 a1.55,1.4 0 0 1 -3.1,0 z" fill="#2f3a78"/><path d="M59.5,116.3 h3.1 v1.4 a1.55,1.4 0 0 1 -3.1,0 z" fill="#2f3a78"/><path d="M63.6,116.3 h3.1 v1.4 a1.55,1.4 0 0 1 -3.1,0 z" fill="#2f3a78"/><path d="M67.7,116.3 h3.1 v1.4 a1.55,1.4 0 0 1 -3.1,0 z" fill="#2f3a78"/><path d="M71.8,116.3 h3.1 v1.4 a1.55,1.4 0 0 1 -3.1,0 z" fill="#2f3a78"/><path d="M75.9,116.3 h3.1 v1.4 a1.55,1.4 0 0 1 -3.1,0 z" fill="#2f3a78"/><path d="M55.4,120.5 h3.1 v1.4 a1.55,1.4 0 0 1 -3.1,0 z" fill="#2f3a78"/><path d="M59.5,120.5 h3.1 v1.4 a1.55,1.4 0 0 1 -3.1,0 z" fill="#2f3a78"/><path d="M63.6,120.5 h3.1 v1.4 a1.55,1.4 0 0 1 -3.1,0 z" fill="#2f3a78"/><path d="M67.7,120.5 h3.1 v1.4 a1.55,1.4 0 0 1 -3.1,0 z" fill="#2f3a78"/><path d="M71.8,120.5 h3.1 v1.4 a1.55,1.4 0 0 1 -3.1,0 z" fill="#2f3a78"/><path d="M75.9,120.5 h3.1 v1.4 a1.55,1.4 0 0 1 -3.1,0 z" fill="#2f3a78"/><path d="M55.4,124.7 h3.1 v1.4 a1.55,1.4 0 0 1 -3.1,0 z" fill="#2f3a78"/><path d="M59.5,124.7 h3.1 v1.4 a1.55,1.4 0 0 1 -3.1,0 z" fill="#2f3a78"/><path d="M63.6,124.7 h3.1 v1.4 a1.55,1.4 0 0 1 -3.1,0 z" fill="#2f3a78"/><path d="M67.7,124.7 h3.1 v1.4 a1.55,1.4 0 0 1 -3.1,0 z" fill="#2f3a78"/><path d="M71.8,124.7 h3.1 v1.4 a1.55,1.4 0 0 1 -3.1,0 z" fill="#2f3a78"/><path d="M75.9,124.7 h3.1 v1.4 a1.55,1.4 0 0 1 -3.1,0 z" fill="#2f3a78"/><path d="M55.4,128.9 h3.1 v1.4 a1.55,1.4 0 0 1 -3.1,0 z" fill="#2f3a78"/><path d="M59.5,128.9 h3.1 v1.4 a1.55,1.4 0 0 1 -3.1,0 z" fill="#2f3a78"/><path d="M63.6,128.9 h3.1 v1.4 a1.55,1.4 0 0 1 -3.1,0 z" fill="#2f3a78"/><path d="M67.7,128.9 h3.1 v1.4 a1.55,1.4 0 0 1 -3.1,0 z" fill="#2f3a78"/><path d="M71.8,128.9 h3.1 v1.4 a1.55,1.4 0 0 1 -3.1,0 z" fill="#2f3a78"/><path d="M75.9,128.9 h3.1 v1.4 a1.55,1.4 0 0 1 -3.1,0 z" fill="#2f3a78"/><path d="M55.4,133.1 h3.1 v1.4 a1.55,1.4 0 0 1 -3.1,0 z" fill="#2f3a78"/><path d="M59.5,133.1 h3.1 v1.4 a1.55,1.4 0 0 1 -3.1,0 z" fill="#2f3a78"/><path d="M63.6,133.1 h3.1 v1.4 a1.55,1.4 0 0 1 -3.1,0 z" fill="#2f3a78"/><path d="M67.7,133.1 h3.1 v1.4 a1.55,1.4 0 0 1 -3.1,0 z" fill="#2f3a78"/><path d="M71.8,133.1 h3.1 v1.4 a1.55,1.4 0 0 1 -3.1,0 z" fill="#2f3a78"/><path d="M75.9,133.1 h3.1 v1.4 a1.55,1.4 0 0 1 -3.1,0 z" fill="#2f3a78"/><rect x="59" y="105.8" width="9" height="0.8" fill="#8aa0c0"/><path d="M61,110 L66,110 L67,111.8 L60,111.8 Z" fill="#eee"/><path d="M50,110 L56,106.5 M77.5,106.5 L83.5,110" stroke="#333" stroke-width="0.6"/><path d="M46.5,110 q2,4 0,8" fill="none" stroke="#2a3470" stroke-width="1.6"/><path d="M46.5,134 q2,4 0,8" fill="none" stroke="#2a3470" stroke-width="1.6"/><path d="M86,110 q-2,4 0,8" fill="none" stroke="#2a3470" stroke-width="1.6"/><path d="M86,134 q-2,4 0,8" fill="none" stroke="#2a3470" stroke-width="1.6"/><path d="M44.5,150 q2,4 0,8" fill="none" stroke="#2a3470" stroke-width="1.6"/><path d="M47,168 q4,-1.5 8,0 M76.5,168 q4,-1.5 8,0" fill="none" stroke="#2a3470" stroke-width="1.8"/><path d="M57,155 l5,-3 M62,156 q5,3 10,0 M72,152 l5,3" stroke="#f4f4f4" stroke-width="1.8"/><circle cx="57" cy="152" r="1.2" fill="#6a90d0"/><circle cx="67" cy="152.5" r="1.2" fill="#6a90d0"/><circle cx="77" cy="152" r="1.2" fill="#6a90d0"/><circle cx="66.5" cy="171" r="5.2" fill="#fff" stroke="#333" stroke-width="0.6"/><path d="M63,167.5 L70,174.5 M70,167.5 L63,174.5" stroke="#333" stroke-width="0.5"/><path d="M61,148 V142 L64,145 L67,142 V148 M67,142 L70,145 L73,142 V148" fill="none" stroke="#333" stroke-width="0.5"/></svg><div class="abs" style="left:17px;top:184.5px;width:100px;text-align:center;font-size:10.6px;line-height:12px;color:#8c8c8c;white-space:nowrap">Interior design</div><div class="abs" style="left:167px;top:91.5px;width:87px;height:1.5px;background:#d4d4d4"></div><svg style="left:167px;top:73px" width="88" height="20" viewBox="167 73 88 20"><path d="M174.3,78.8 L171.3,82.2 L174.3,85.6" fill="none" stroke="#8aa6cc" stroke-width="1.3"/><path d="M185.5,78.8 L188.5,82.2 L185.5,85.6" fill="none" stroke="#1f4f9a" stroke-width="1.3"/></svg><div class="abs" style="left:193.8px;top:75.2px;width:53.9px;height:13.8px;border-radius:3.5px;background:#fff;box-shadow:0 0 0 0.5px rgba(0,0,0,.2),0 0.8px 1px rgba(0,0,0,.2)"></div><div class="abs" style="left:236.3px;top:75.2px;width:11.4px;height:13.8px;border-radius:0 3.5px 3.5px 0;background:linear-gradient(#5aa8f8,#1a7ef0)"></div><svg style="left:236px;top:75px" width="12" height="14" viewBox="0 0 12 14"><path d="M3.8,5.5 L5.9,3.5 L8,5.5 M3.8,8.5 L5.9,10.5 L8,8.5" fill="none" stroke="#fff" stroke-width="1"/></svg><div class="abs" style="left:199px;top:76.5px;font-size:9.4px;line-height:11px;color:#222;white-space:nowrap">Bathro...</div><div class="libl" style="top:150px">Shower</div><div class="libl" style="top:222.5px">Corner shower</div><div class="libl" style="top:295px">Corner bath</div><div class="libl" style="top:368px">Square tub</div><div class="libl" style="top:440.5px">Bath tub</div><div class="libl" style="top:513px">Bath 1</div><div class="libl" style="top:586px">Bath 2</div><div class="libl" style="top:658.5px">Spa tub</div><div class="libl" style="top:731px">Bidet</div><div class="libl" style="top:804px">Wall toilet</div><div class="libl" style="top:876px">Toilet 1</div><svg style="left:167px;top:92px;overflow:hidden" width="87" height="813" viewBox="167 92 87 813"><defs><radialGradient id="lg1" cx="0.5" cy="0.5" r="0.6"><stop offset="0" stop-color="#d0d0d0"/><stop offset="1" stop-color="#f0f0f0"/></radialGradient>
<linearGradient id="lg2" x1="0" y1="0" x2="0" y2="1"><stop offset="0" stop-color="#e4e4e4"/><stop offset="1" stop-color="#dcdcdc"/></linearGradient></defs><rect x="186.2" y="97.8" width="48.8" height="48.2" fill="#fafafa" stroke="#aaa" stroke-width="0.8"/><rect x="188.5" y="100.2" width="44.2" height="43.6" fill="url(#lg1)" stroke="#7a7a7a" stroke-width="0.8"/><path d="M188.5,100.2 L232.7,143.8 M232.7,100.2 L188.5,143.8" stroke="#7a7a7a" stroke-width="0.8"/><rect x="208.8" y="120" width="3.5" height="3.5" fill="#777"/><path d="M186.3,169.8 L222,169.8 L235.4,183 L235.4,218.8 L186.3,218.8 Z" fill="#fafafa" stroke="#aaa" stroke-width="0.8"/><path d="M188.5,172 L220.5,172 L233,184.5 L233,216.5 L188.5,216.5 Z" fill="#e6e6e6" stroke="#7a7a7a" stroke-width="0.8"/><path d="M188.5,172 L200.5,203.5 L220.5,172 M200.5,203.5 L233,184.5 M200.5,203.5 L233,216.5 M200.5,203.5 L188.5,216.5" fill="none" stroke="#7a7a7a" stroke-width="0.8"/><rect x="199" y="202" width="3.2" height="3.2" fill="#666"/><path d="M186.3,242.7 L223,242.7 L235.4,255 L235.4,291.4 L186.3,291.4 Z" fill="#fafafa" stroke="#aaa" stroke-width="0.8"/><path d="M189,245.5 L222,245.5 L232.5,256 L232.5,286.5 Q232.5,288.8 230,288.8 L191.5,288.8 Q189,288.8 189,286.5 Z" fill="#f1f1f1" stroke="#7a7a7a" stroke-width="0.8"/><path d="M219,245.5 L232.5,259 L232.5,256 L222,245.5 Z" fill="#cfcfcf" stroke="#7a7a7a" stroke-width="0.8"/><path d="M219.5,245.6 L232.4,258.5 L229,262 L215.5,249 Z" fill="#d5d5d5" stroke="#888" stroke-width="0.6"/><path d="M189.2,274 L203.5,288.6 L191.5,288.6 Q189.2,288.6 189.2,286.5 Z" fill="#d2d2d2" stroke="#888" stroke-width="0.6"/><circle cx="195.8" cy="251.5" r="1" fill="#666"/><path d="M186.3,315.2 L235.4,315.2 L235.4,360 L195,360 Q186.3,360 186.3,351 Z" fill="#fafafa" stroke="#999" stroke-width="0.8"/><path d="M190,319 L232,319 L232,356.5 L197,356.5 Q190,356.5 190,349.5 Z" fill="url(#lg1)" stroke="#7a7a7a" stroke-width="0.8"/><path d="M187,317 L193,323" stroke="#888" stroke-width="2.6"/><path d="M187,317 L193,323" stroke="#f4f4f4" stroke-width="1.6"/><circle cx="210" cy="337.5" r="1.1" fill="#555"/><rect x="195.5" y="388" width="29.4" height="49" fill="#fafafa" stroke="#999" stroke-width="0.8"/><ellipse cx="210.2" cy="412.5" rx="12" ry="22.5" fill="#e0e0e0" stroke="#7a7a7a" stroke-width="0.8"/><ellipse cx="210.2" cy="413.5" rx="9.3" ry="19.5" fill="#d8d8d8" stroke="#aaa" stroke-width="0.5"/><circle cx="210.2" cy="394" r="1.2" fill="#555"/><rect x="184.7" y="473.6" width="50.7" height="23.9" fill="#fafafa" stroke="#999" stroke-width="0.8"/><path d="M187,476 L225,476 A9.5,9.5 0 0 1 225,495 L187,495 Z" fill="#e2e2e2" stroke="#7a7a7a" stroke-width="0.8"/><circle cx="190.5" cy="485.5" r="1.2" fill="#555"/><rect x="184.9" y="544.9" width="50.5" height="26.1" rx="13" fill="#fafafa" stroke="#888" stroke-width="0.8"/><rect x="187.3" y="547.3" width="45.7" height="21.3" rx="10.6" fill="#e2e2e2" stroke="#7a7a7a" stroke-width="0.8"/><circle cx="190.8" cy="558" r="1.2" fill="#555"/><path d="M185.2,606.2 L234.6,606.2 A49.4,48.4 0 0 1 185.2,654.6 Z" fill="#fafafa" stroke="#888" stroke-width="0.8"/><circle cx="197.3" cy="617.6" r="9.3" fill="none" stroke="#999" stroke-width="0.7"/><circle cx="197.3" cy="617.6" r="7.9" fill="none" stroke="#aaa" stroke-width="0.5"/><circle cx="209.4" cy="629.4" r="15" fill="none" stroke="#d6d6d6" stroke-width="5.2"/><circle cx="209.4" cy="629.4" r="17.6" fill="none" stroke="#888" stroke-width="0.7"/><circle cx="209.4" cy="629.4" r="12.4" fill="#e2e2e2" stroke="#888" stroke-width="0.7"/><ellipse cx="195.2" cy="627.8" rx="2.2" ry="1.4" fill="#f4f4f4" stroke="#777" stroke-width="0.5"/><ellipse cx="200.5" cy="619.5" rx="2.2" ry="1.4" fill="#f4f4f4" stroke="#777" stroke-width="0.5"/><ellipse cx="208.8" cy="614.8" rx="2.2" ry="1.4" fill="#f4f4f4" stroke="#777" stroke-width="0.5"/><ellipse cx="224.5" cy="629.5" rx="2.2" ry="1.4" fill="#f4f4f4" stroke="#777" stroke-width="0.5"/><ellipse cx="219.5" cy="638.5" rx="2.2" ry="1.4" fill="#f4f4f4" stroke="#777" stroke-width="0.5"/><ellipse cx="211" cy="644" rx="2.2" ry="1.4" fill="#f4f4f4" stroke="#777" stroke-width="0.5"/><rect x="213" y="607.5" width="3" height="7" fill="#fff" stroke="#888" stroke-width="0.5"/><path d="M209.5,608.5 l1.2,1.2 m0,-1.2 l-1.2,1.2 M218.5,608.5 l1.2,1.2 m0,-1.2 l-1.2,1.2" stroke="#555" stroke-width="0.5"/><path d="M192.2,678.9 L228.2,678.9 L222,727.9 L198.4,727.9 Z" fill="#fafafa" stroke="#888" stroke-width="0.8"/><path d="M194.5,681 L226,681 L220.3,725.5 L200.2,725.5 Z" fill="none" stroke="#999" stroke-width="0.7"/><path d="M198.5,694 Q210.2,689 222,694 L218.5,718.5 Q210.2,721 201.5,718.5 Z" fill="#d8d8d8" stroke="#7a7a7a" stroke-width="0.8"/><path d="M188,759.6 L231.5,761.5 Q234.5,761.8 234.5,764.5 L234.5,789.5 Q234.5,792 231.5,792.2 L188,793.3 Q185.9,793.3 185.9,791 L185.9,762 Q185.9,759.6 188,759.6 Z" fill="#fafafa" stroke="#777" stroke-width="0.8"/><path d="M201.2,759.8 L201.2,793.1 M203.2,760 L203.2,793" stroke="#888" stroke-width="0.7"/><ellipse cx="218.7" cy="776.4" rx="10.5" ry="8.5" fill="#d6d6d6" stroke="#7a7a7a" stroke-width="0.8"/><path d="M188,835.5 Q200,836 210,834.6 Q235,832.5 235,849.5 Q235,866 210,863.5 Q200,862.5 188,864.2 Q185.5,864.2 185.5,861 L185.5,838.5 Q185.5,835.5 188,835.5 Z" fill="#fafafa" stroke="#777" stroke-width="0.8"/><ellipse cx="213.5" cy="849.3" rx="14.2" ry="9.8" fill="#d6d6d6" stroke="#7a7a7a" stroke-width="0.8"/><rect x="191" y="897.3" width="37.8" height="12" fill="#fafafa" stroke="#999" stroke-width="0.8"/><rect x="193" y="899.5" width="33.8" height="10" fill="#fff" stroke="#888" stroke-width="0.6"/></svg><div class="abs" style="left:1258.8px;top:73.5px;width:241.2px;height:22.5px;background:linear-gradient(#f3f3f3,#e9e9e9);border-bottom:1px solid #d0d0d0"></div><div class="abs" style="left:1258.8px;top:73.5px;width:80.2px;height:22.5px;background:#0a8ce9"></div><div class="abs" style="left:1420px;top:74px;width:0.8px;height:21.5px;background:#cacaca"></div><div class="abs" style="left:1258px;top:79px;width:81px;text-align:center;font-size:9.9px;line-height:13px;color:#fff;white-space:nowrap">Arrange &amp; Size</div><div class="abs" style="left:1339px;top:79px;width:81px;text-align:center;font-size:9.9px;line-height:13px;color:#222;white-space:nowrap">Format</div><div class="abs" style="left:1420px;top:79px;width:80px;text-align:center;font-size:9.9px;line-height:13px;color:#222;white-space:nowrap">Text</div><svg style="left:1263px;top:104.8px" width="9" height="8" viewBox="0 0 9 8"><path d="M0.8,0.6 L8,0.6 L4.4,6.4 Z" fill="#777"/></svg><div class="rp" style="left:1275.5px;top:102.5px;font-size:9.3px;color:#3a3a3a">Order</div><div class="abs" style="left:1302px;top:111.5px;width:190px;height:0.8px;background:#dadada"></div><svg style="left:1263px;top:157.70000000000002px" width="9" height="8" viewBox="0 0 9 8"><path d="M0.8,0.6 L8,0.6 L4.4,6.4 Z" fill="#777"/></svg><div class="rp" style="left:1275.5px;top:155.4px;font-size:9.3px;color:#3a3a3a">Align and Distribute</div><div class="abs" style="left:1361.6px;top:164.4px;width:130.4000000000001px;height:0.8px;background:#dadada"></div><svg style="left:1263px;top:231.3px" width="9" height="8" viewBox="0 0 9 8"><path d="M0.8,0.6 L8,0.6 L4.4,6.4 Z" fill="#777"/></svg><div class="rp" style="left:1275.5px;top:229.0px;font-size:9.3px;color:#3a3a3a">Size</div><div class="abs" style="left:1296px;top:238.0px;width:196px;height:0.8px;background:#dadada"></div><svg style="left:1263px;top:291.0px" width="9" height="8" viewBox="0 0 9 8"><path d="M0.8,0.6 L8,0.6 L4.4,6.4 Z" fill="#777"/></svg><div class="rp" style="left:1275.5px;top:288.7px;font-size:9.3px;color:#3a3a3a">Position</div><div class="abs" style="left:1312px;top:297.7px;width:180px;height:0.8px;background:#dadada"></div><svg style="left:1263px;top:351.3px" width="9" height="8" viewBox="0 0 9 8"><path d="M0.8,0.6 L8,0.6 L4.4,6.4 Z" fill="#777"/></svg><div class="rp" style="left:1275.5px;top:349.0px;font-size:9.3px;color:#3a3a3a">Rotate and Flip</div><div class="abs" style="left:1338px;top:358.0px;width:154px;height:0.8px;background:#dadada"></div><svg style="left:1263px;top:437.8px" width="9" height="8" viewBox="0 0 9 8"><path d="M0.8,0.6 L8,0.6 L4.4,6.4 Z" fill="#777"/></svg><div class="rp" style="left:1275.5px;top:435.5px;font-size:9.3px;color:#3a3a3a">Group and Lock</div><div class="abs" style="left:1346px;top:444.5px;width:146px;height:0.8px;background:#dadada"></div><svg style="left:1263px;top:490.8px" width="9" height="8" viewBox="0 0 9 8"><path d="M0.8,0.6 L8,0.6 L4.4,6.4 Z" fill="#777"/></svg><div class="rp" style="left:1275.5px;top:488.5px;font-size:9.3px;color:#3a3a3a">Make Same</div><div class="abs" style="left:1329px;top:497.5px;width:163px;height:0.8px;background:#dadada"></div><svg style="left:1280px;top:116px" width="16" height="14" viewBox="0 0 16 14"><rect x="2.5" y="1.5" width="6" height="6" fill="#fff" stroke="#2b5da8" stroke-width="0.9"/><rect x="4.5" y="4" width="5" height="5" fill="#5cc132" stroke="#2e7d18" stroke-width="0.7"/><rect x="6.5" y="6.5" width="6" height="6" fill="#fff" stroke="#2b5da8" stroke-width="0.9"/></svg><svg style="left:1317px;top:116px" width="16" height="14" viewBox="0 0 16 14"><rect x="2.5" y="1.5" width="6" height="6" fill="#fff" stroke="#2b5da8" stroke-width="0.9"/><rect x="6.5" y="6.5" width="6" height="6" fill="#fff" stroke="#2b5da8" stroke-width="0.9"/><rect x="4" y="3.5" width="6.5" height="6.5" fill="#8fe070" stroke="#2e7d18" stroke-width="0.7"/></svg><svg style="left:1354px;top:116px" width="16" height="14" viewBox="0 0 16 14"><rect x="2.5" y="1.5" width="7" height="7" fill="#6e9fd6" stroke="#1f4a90" stroke-width="0.9"/><rect x="6" y="5" width="7" height="7" fill="#5cc132" stroke="#2e7d18" stroke-width="0.9"/></svg><svg style="left:1391px;top:116px" width="16" height="14" viewBox="0 0 16 14"><rect x="6" y="5" width="7" height="7" fill="#5cc132" stroke="#2e7d18" stroke-width="0.9"/><rect x="2.5" y="1.5" width="7" height="7" fill="#6e9fd6" stroke="#1f4a90" stroke-width="0.9"/><rect x="6" y="5" width="7" height="7" fill="#5cc132" stroke="#2e7d18" stroke-width="0.9"/></svg><div class="rps" style="left:1256.5px;width:60px;top:134.5px;font-size:7.6px;color:#555">Back</div><div class="rps" style="left:1294px;width:60px;top:134.5px;font-size:7.6px;color:#555">Front</div><div class="rps" style="left:1331.5px;width:60px;top:134.5px;font-size:7.6px;color:#555">Backward</div><div class="rps" style="left:1367.5px;width:60px;top:134.5px;font-size:7.6px;color:#555">Forward</div><svg style="left:1279px;top:171px" width="16" height="15" viewBox="0 0 16 15"><path d="M3.5,1 V14" stroke="#e8503a" stroke-width="1"/><rect x="4" y="2" width="5" height="4.5" fill="#6e9fd6" stroke="#1f4a90" stroke-width="0.8"/><rect x="4" y="7.5" width="8" height="5.5" fill="#5cc132" stroke="#2e7d18" stroke-width="0.8"/></svg><svg style="left:1317px;top:171px" width="16" height="15" viewBox="0 0 16 15"><rect x="5.5" y="2" width="6" height="4.5" fill="#6e9fd6" stroke="#1f4a90" stroke-width="0.8"/><rect x="4.5" y="7.5" width="8" height="5.5" fill="#5cc132" stroke="#2e7d18" stroke-width="0.8"/><path d="M8.5,1 V14" stroke="#e8503a" stroke-width="1"/></svg><svg style="left:1353px;top:171px" width="16" height="15" viewBox="0 0 16 15"><rect x="7" y="2" width="5" height="4.5" fill="#6e9fd6" stroke="#1f4a90" stroke-width="0.8"/><rect x="4" y="7.5" width="8" height="5.5" fill="#5cc132" stroke="#2e7d18" stroke-width="0.8"/><path d="M12.5,1 V14" stroke="#e8503a" stroke-width="1"/></svg><svg style="left:1391px;top:171px" width="16" height="15" viewBox="0 0 16 15"><path d="M1,3 H15" stroke="#e8503a" stroke-width="1"/><rect x="2.5" y="4.5" width="5" height="5" fill="#6e9fd6" stroke="#1f4a90" stroke-width="0.8"/><rect x="8.5" y="4.5" width="5.5" height="8" fill="#5cc132" stroke="#2e7d18" stroke-width="0.8"/></svg><svg style="left:1428px;top:171px" width="16" height="15" viewBox="0 0 16 15"><rect x="2.5" y="5.5" width="5" height="5" fill="#6e9fd6" stroke="#1f4a90" stroke-width="0.8"/><rect x="8.5" y="4" width="5.5" height="8" fill="#5cc132" stroke="#2e7d18" stroke-width="0.8"/><path d="M1,8 H15" stroke="#e8503a" stroke-width="1"/></svg><svg style="left:1466px;top:171px" width="16" height="15" viewBox="0 0 16 15"><rect x="2.5" y="6" width="5" height="5" fill="#6e9fd6" stroke="#1f4a90" stroke-width="0.8"/><rect x="8.5" y="3" width="5.5" height="8" fill="#5cc132" stroke="#2e7d18" stroke-width="0.8"/><path d="M1,12.5 H15" stroke="#e8503a" stroke-width="1"/></svg><div class="rps" style="left:1256px;width:60px;top:190.3px;font-size:7.6px;color:#555">Left</div><div class="rps" style="left:1295px;width:60px;top:190.3px;font-size:7.6px;color:#555">Center</div><div class="rps" style="left:1331px;width:60px;top:190.3px;font-size:7.6px;color:#555">Right</div><div class="rps" style="left:1369px;width:60px;top:190.3px;font-size:7.6px;color:#555">Top</div><div class="rps" style="left:1406.5px;width:60px;top:190.3px;font-size:7.6px;color:#555">Middle</div><div class="rps" style="left:1444px;width:60px;top:190.3px;font-size:7.6px;color:#555">Bottom</div><div class="abs" style="left:1276.8px;top:203.6px;width:101.20000000000005px;height:13.599999999999994px;border-radius:3.5px;background:#fff;box-shadow:0 0 0 0.5px rgba(0,0,0,.22),0 0.8px 1px rgba(0,0,0,.2)"></div><div class="abs" style="left:1366.5px;top:203.6px;width:11.5px;height:13.599999999999994px;border-radius:0 3.5px 3.5px 0;background:linear-gradient(#5aa8f8,#1a7ef0)"></div><svg style="left:1366.5px;top:203.6px" width="12" height="14" viewBox="0 0 12 14"><path d="M3.8,5.3 L5.8,3.4 L7.8,5.3 M3.8,8.3 L5.8,10.2 L7.8,8.3" fill="none" stroke="#fff" stroke-width="0.9"/></svg><div class="rp" style="left:1304px;top:204.89999999999998px;font-size:9.3px;color:#333">Horizontal</div><svg style="left:1284px;top:203px" width="16" height="15" viewBox="0 0 16 15"><rect x="1.5" y="5.5" width="5" height="5" fill="#6e9fd6" stroke="#1f4a90" stroke-width="0.8"/><rect x="8" y="3.5" width="5.5" height="5.5" fill="#5cc132" stroke="#2e7d18" stroke-width="0.8"/><path d="M7,1.5 V13" stroke="#e8503a" stroke-width="1.2"/></svg><div class="abs" style="left:1389.3px;top:203.6px;width:101.10000000000014px;height:13.599999999999994px;border-radius:3.5px;background:#fff;box-shadow:0 0 0 0.5px rgba(0,0,0,.22),0 0.8px 1px rgba(0,0,0,.2)"></div><div class="abs" style="left:1478.9px;top:203.6px;width:11.5px;height:13.599999999999994px;border-radius:0 3.5px 3.5px 0;background:linear-gradient(#5aa8f8,#1a7ef0)"></div><svg style="left:1478.9px;top:203.6px" width="12" height="14" viewBox="0 0 12 14"><path d="M3.8,5.3 L5.8,3.4 L7.8,5.3 M3.8,8.3 L5.8,10.2 L7.8,8.3" fill="none" stroke="#fff" stroke-width="0.9"/></svg><div class="rp" style="left:1416.8px;top:204.89999999999998px;font-size:9.3px;color:#333">Vertical</div><svg style="left:1395px;top:203px" width="17" height="15" viewBox="0 0 17 15"><rect x="4.5" y="1" width="5" height="5" fill="#6e9fd6" stroke="#1f4a90" stroke-width="0.8"/><rect x="7.5" y="8" width="5" height="5.5" fill="#5cc132" stroke="#2e7d18" stroke-width="0.8"/><path d="M1,6.5 H16 M1,8 H16" stroke="#e8503a" stroke-width="0.9"/></svg><div class="rp" style="left:1275.5px;top:245px;font-size:9.3px;color:#333">Width:</div><div class="abs" style="left:1311.5px;top:243.5px;width:54.0px;height:14.0px;background:#fff;border:0.8px solid #c9c9c9;box-shadow:inset 0 0.6px 0 #e0e0e0"></div><div class="rp" style="left:1315.3px;top:245.7px;font-size:9.3px;color:#222">13.3 mm</div><div class="abs" style="left:1367.3px;top:243.5px;width:8px;height:14.0px;border-radius:4px;background:#fff;box-shadow:0 0 0 0.6px rgba(0,0,0,.25)"></div><svg style="left:1367px;top:243.5px" width="9" height="14" viewBox="0 0 9 14"><path d="M2.5,5 L4.3,3.2 L6.1,5 M2.5,9 L4.3,10.8 L6.1,9" fill="none" stroke="#444" stroke-width="0.8"/></svg><div class="rp" style="left:1275.5px;top:263.5px;font-size:9.3px;color:#333">Height</div><div class="abs" style="left:1311.5px;top:261.5px;width:54.0px;height:14.0px;background:#fff;border:0.8px solid #c9c9c9;box-shadow:inset 0 0.6px 0 #e0e0e0"></div><div class="rp" style="left:1315.3px;top:263.7px;font-size:9.3px;color:#222">10.8 mm</div><div class="abs" style="left:1367.3px;top:261.5px;width:8px;height:14.0px;border-radius:4px;background:#fff;box-shadow:0 0 0 0.6px rgba(0,0,0,.25)"></div><svg style="left:1367px;top:261.5px" width="9" height="14" viewBox="0 0 9 14"><path d="M2.5,5 L4.3,3.2 L6.1,5 M2.5,9 L4.3,10.8 L6.1,9" fill="none" stroke="#444" stroke-width="0.8"/></svg><div class="abs" style="left:1388px;top:243px;width:8.5px;height:8.5px;border-radius:2px;background:#fff;box-shadow:0 0 0 0.7px rgba(0,0,0,.3)"></div><div class="rp" style="left:1402px;top:242px;font-size:9.3px;color:#333">Lock Proportions</div><div class="rp" style="left:1275.5px;top:306.5px;font-size:9.3px;color:#333">X</div><div class="abs" style="left:1311.5px;top:305px;width:53.799999999999955px;height:13.800000000000011px;background:#fff;border:0.8px solid #c9c9c9;box-shadow:inset 0 0.6px 0 #e0e0e0"></div><div class="rp" style="left:1315.3px;top:307.09999999999997px;font-size:9.3px;color:#222">110.1 mm</div><div class="abs" style="left:1367.3px;top:305px;width:8px;height:13.800000000000011px;border-radius:4px;background:#fff;box-shadow:0 0 0 0.6px rgba(0,0,0,.25)"></div><svg style="left:1367px;top:305px" width="9" height="14" viewBox="0 0 9 14"><path d="M2.5,5 L4.3,3.2 L6.1,5 M2.5,9 L4.3,10.8 L6.1,9" fill="none" stroke="#444" stroke-width="0.8"/></svg><div class="rp" style="left:1275.5px;top:324.5px;font-size:9.3px;color:#333">Y</div><div class="abs" style="left:1311.5px;top:323px;width:53.799999999999955px;height:14px;background:#fff;border:0.8px solid #c9c9c9;box-shadow:inset 0 0.6px 0 #e0e0e0"></div><div class="rp" style="left:1315.3px;top:325.2px;font-size:9.3px;color:#222">140.6 mm</div><div class="abs" style="left:1367.3px;top:323px;width:8px;height:14px;border-radius:4px;background:#fff;box-shadow:0 0 0 0.6px rgba(0,0,0,.25)"></div><svg style="left:1367px;top:323px" width="9" height="14" viewBox="0 0 9 14"><path d="M2.5,5 L4.3,3.2 L6.1,5 M2.5,9 L4.3,10.8 L6.1,9" fill="none" stroke="#444" stroke-width="0.8"/></svg><div class="rp" style="left:1273.5px;top:366px;font-size:9.3px;color:#333">Angle</div><div class="abs" style="left:1311.5px;top:364.5px;width:53.799999999999955px;height:14.0px;background:#fff;border:0.8px solid #c9c9c9;box-shadow:inset 0 0.6px 0 #e0e0e0"></div><div class="rp" style="left:1315.3px;top:366.7px;font-size:9.3px;color:#222">0.00 rad</div><div class="abs" style="left:1367.3px;top:364.5px;width:8px;height:14.0px;border-radius:4px;background:#fff;box-shadow:0 0 0 0.6px rgba(0,0,0,.25)"></div><svg style="left:1367px;top:364.5px" width="9" height="14" viewBox="0 0 9 14"><path d="M2.5,5 L4.3,3.2 L6.1,5 M2.5,9 L4.3,10.8 L6.1,9" fill="none" stroke="#444" stroke-width="0.8"/></svg><div class="rp" style="left:1275.5px;top:384px;font-size:9.3px;color:#333">Pin</div><div class="abs" style="left:1311.5px;top:382.5px;width:139.5px;height:14.0px;border-radius:3.5px;background:#fff;box-shadow:0 0 0 0.5px rgba(0,0,0,.22),0 0.8px 1px rgba(0,0,0,.2)"></div><div class="abs" style="left:1439.5px;top:382.5px;width:11.5px;height:14.0px;border-radius:0 3.5px 3.5px 0;background:linear-gradient(#5aa8f8,#1a7ef0)"></div><svg style="left:1439.5px;top:382.5px" width="12" height="14" viewBox="0 0 12 14"><path d="M3.8,5.3 L5.8,3.4 L7.8,5.3 M3.8,8.3 L5.8,10.2 L7.8,8.3" fill="none" stroke="#fff" stroke-width="0.9"/></svg><div class="rp" style="left:1317.5px;top:384.0px;font-size:9.3px;color:#333">Center-Center</div><svg style="left:1279px;top:401px" width="17" height="14" viewBox="0 0 17 14"><path d="M2,12 L8,4 L8,12 Z" fill="#6e9fd6" stroke="#1f4a90" stroke-width="0.8"/><path d="M9.5,12 L9.5,4 L15.5,12 Z" fill="#2b5da8"/><path d="M3,5 Q7,0.5 12,3" fill="none" stroke="#2b8ae0" stroke-width="1.2"/><path d="M12.8,1 L13,4.5 L10,3.8 Z" fill="#2b8ae0"/></svg><svg style="left:1319px;top:401px" width="17" height="14" viewBox="0 0 17 14"><path d="M2,12 L8,4 L8,12 Z" fill="#2b5da8"/><path d="M9.5,12 L9.5,4 L15.5,12 Z" fill="#6e9fd6" stroke="#1f4a90" stroke-width="0.8"/><path d="M14,5 Q10,0.5 5,3" fill="none" stroke="#2b8ae0" stroke-width="1.2"/><path d="M4.2,1 L4,4.5 L7,3.8 Z" fill="#2b8ae0"/></svg><svg style="left:1353px;top:401px" width="18" height="14" viewBox="0 0 18 14"><path d="M4,12 L10,3 L14,3 L8,12 Z" fill="#6e9fd6" stroke="#1f4a90" stroke-width="0.8"/><path d="M3,11 Q1,6 5,3" fill="none" stroke="#2b8ae0" stroke-width="1.2"/><path d="M14,4 Q17,8 13,12" fill="none" stroke="#2b8ae0" stroke-width="1.2"/></svg><div class="rp" style="left:1387.5px;top:404.5px;font-size:9.3px;color:#333">Flip</div><svg style="left:1426px;top:401px" width="17" height="15" viewBox="0 0 17 15"><path d="M2,8 L11,3 L11,12 Z" fill="#6e9fd6" stroke="#1f4a90" stroke-width="0.8"/><path d="M2,8 L11,5 L11,8 Z" fill="#2b5da8"/><path d="M14,3 V13" stroke="#2b8ae0" stroke-width="1.1"/><path d="M12.5,4.5 L14,2.5 L15.5,4.5 M12.5,11.5 L14,13.5 L15.5,11.5" fill="none" stroke="#2b8ae0" stroke-width="1"/></svg><svg style="left:1465px;top:401px" width="17" height="15" viewBox="0 0 17 15"><path d="M8,1.5 L3,10 L8,10 Z" fill="#6e9fd6" stroke="#1f4a90" stroke-width="0.8"/><path d="M9,1.5 L14,10 L9,10 Z" fill="#2b5da8"/><path d="M2,12.5 H15" stroke="#2b8ae0" stroke-width="1.1"/></svg><div class="rps" style="left:1257.7px;width:60px;top:415.5px;font-size:7.8px;color:#555">90º CW</div><div class="rps" style="left:1298.5px;width:60px;top:415.5px;font-size:7.8px;color:#555">90º CCW</div><div class="rps" style="left:1332px;width:60px;top:415.5px;font-size:7.8px;color:#555">180º</div><div class="rps" style="left:1404.7px;width:60px;top:415.5px;font-size:7.8px;color:#555">Vertical</div><div class="rps" style="left:1441.8px;width:60px;top:415.5px;font-size:7.8px;color:#555">Horizontal</div><svg style="left:1274px;top:450px" width="15" height="15" viewBox="0 0 15 15"><rect x="2.5" y="2.5" width="9" height="9" fill="none" stroke="#2b5da8" stroke-width="0.9"/><rect x="5" y="5" width="6" height="6" fill="#fff" stroke="#2b5da8" stroke-width="0.9"/><g fill="#3ab52a"><circle cx="2.5" cy="2.5" r="1.3"/><circle cx="11.5" cy="2.5" r="1.3"/><circle cx="2.5" cy="11.5" r="1.3"/><circle cx="11.5" cy="11.5" r="1.3"/></g></svg><svg style="left:1313px;top:450px" width="15" height="15" viewBox="0 0 15 15"><rect x="2.5" y="2.5" width="6" height="6" fill="none" stroke="#2b5da8" stroke-width="0.9"/><rect x="5.5" y="5.5" width="6" height="6" fill="#fff" stroke="#2b5da8" stroke-width="0.9"/><g fill="#3ab52a"><circle cx="2.5" cy="2.5" r="1.2"/><circle cx="8.5" cy="2.5" r="1.2"/><circle cx="2.5" cy="8.5" r="1.2"/><circle cx="11.5" cy="5.5" r="1.2"/><circle cx="5.5" cy="11.5" r="1.2"/><circle cx="11.5" cy="11.5" r="1.2"/></g></svg><svg style="left:1351px;top:450px" width="15" height="15" viewBox="0 0 15 15"><path d="M4,6.5 V4.5 A3,3 0 0 1 10,4.5 V6.5" fill="none" stroke="#8a96a8" stroke-width="1.2"/><rect x="3" y="6.5" width="8" height="6.5" rx="0.8" fill="#6c84a8"/><circle cx="7" cy="9.5" r="0.9" fill="#333"/></svg><svg style="left:1388px;top:450px" width="15" height="15" viewBox="0 0 15 15"><path d="M4.5,6.5 V4 A2.5,2.5 0 0 1 9.5,4" fill="none" stroke="#c8d0dc" stroke-width="1.2"/><rect x="4" y="7" width="8" height="6.5" rx="0.8" fill="#b8c8dc"/></svg><div class="rps" style="left:1252px;width:60px;top:468.5px;font-size:7.6px;color:#555">Group</div><div class="rps" style="left:1291px;width:60px;top:468.5px;font-size:7.6px;color:#555">UnGroup</div><div class="rps" style="left:1327.5px;width:60px;top:468.5px;font-size:7.6px;color:#555">Lock</div><div class="rps" style="left:1364.5px;width:60px;top:468.5px;font-size:7.6px;color:#555">UnLock</div><svg style="left:1279px;top:504px" width="15" height="15" viewBox="0 0 15 15"><rect x="1.5" y="1.5" width="11" height="11" fill="#2b5da8"/><rect x="3.5" y="3.5" width="7" height="7" fill="#5cc132"/><rect x="5" y="5" width="4" height="4" fill="#2b8a18" opacity="0.4"/></svg><svg style="left:1316px;top:504px" width="15" height="15" viewBox="0 0 15 15"><rect x="1.5" y="6.5" width="12" height="6" fill="#6e9fd6" stroke="#1f4a90" stroke-width="0.9"/><rect x="3.5" y="1" width="8" height="4" fill="#5cc132" stroke="#2e7d18" stroke-width="0.7"/><path d="M2,3 H13" stroke="#1f4a90" stroke-width="0.7"/></svg><svg style="left:1356px;top:504px" width="15" height="15" viewBox="0 0 15 15"><rect x="6.5" y="1.5" width="6" height="12" fill="#6e9fd6" stroke="#1f4a90" stroke-width="0.9"/><rect x="1" y="4" width="4" height="7" fill="#5cc132" stroke="#2e7d18" stroke-width="0.7"/><path d="M3,2 V13" stroke="#1f4a90" stroke-width="0.7"/></svg><div class="rps" style="left:1256px;width:60px;top:520.5px;font-size:7.6px;color:#555">Size</div><div class="rps" style="left:1293.5px;width:60px;top:520.5px;font-size:7.6px;color:#555">Width</div><div class="rps" style="left:1333px;width:60px;top:520.5px;font-size:7.6px;color:#555">Height</div></body></html>
